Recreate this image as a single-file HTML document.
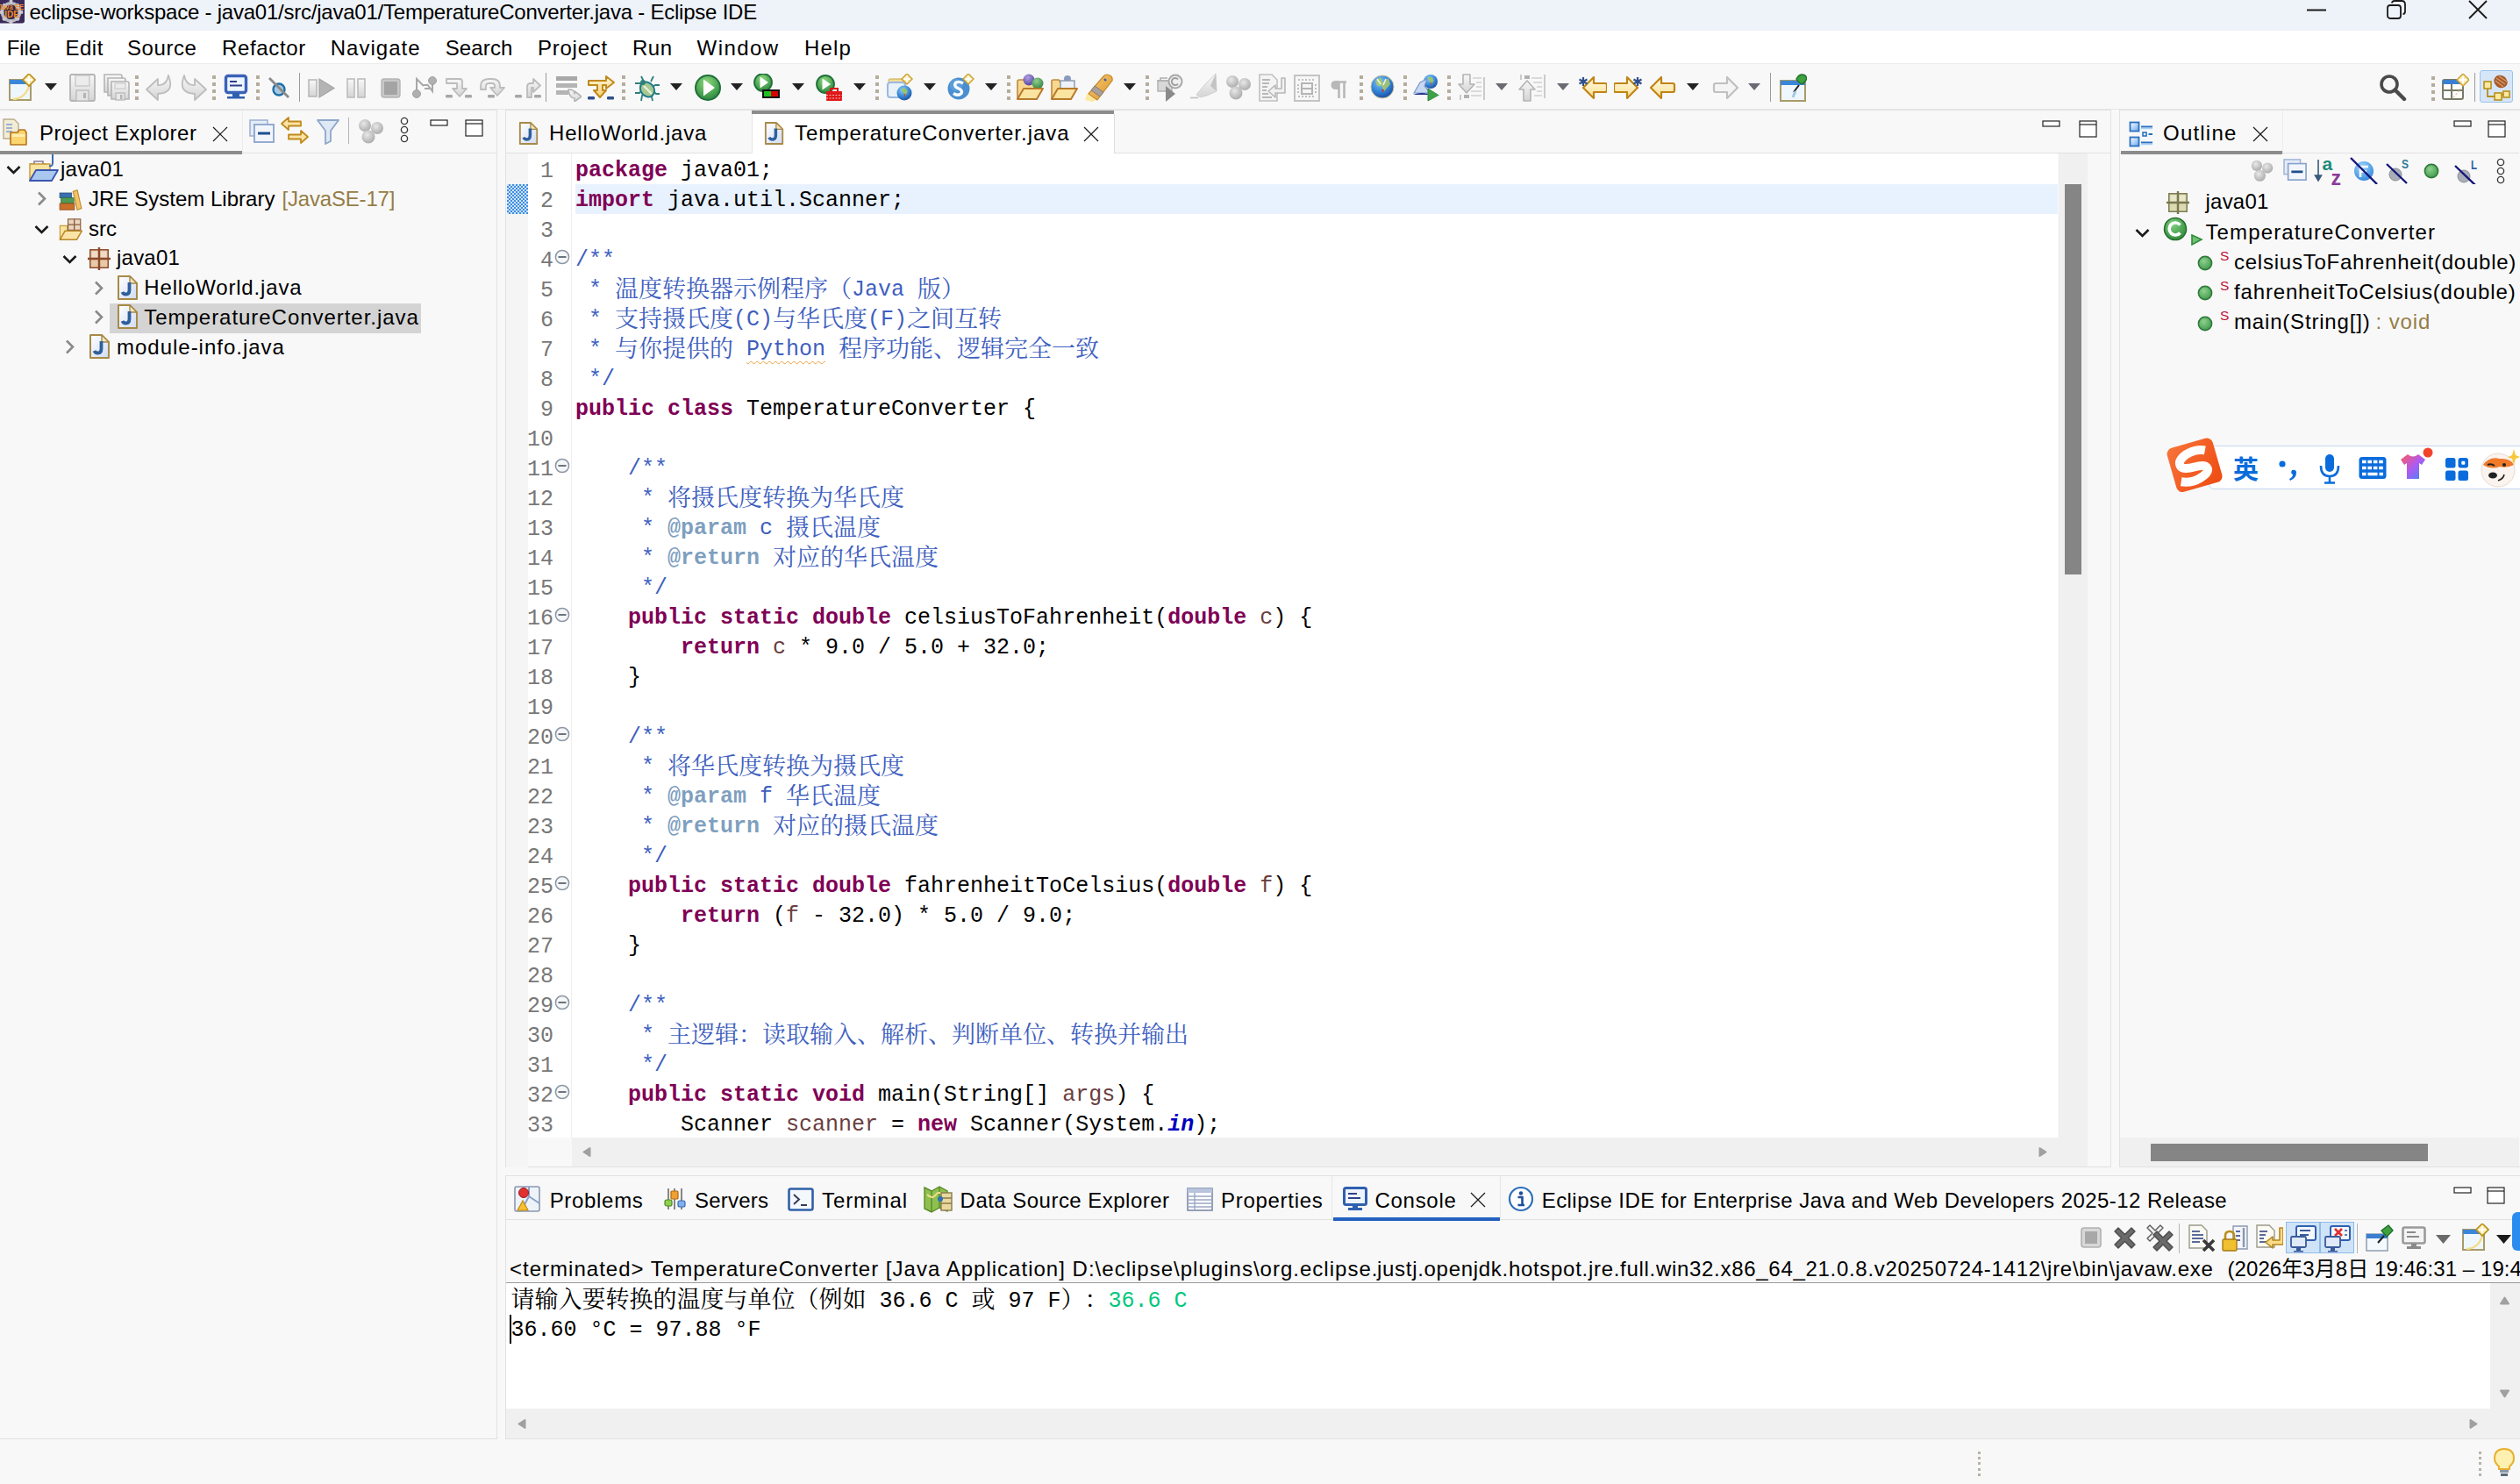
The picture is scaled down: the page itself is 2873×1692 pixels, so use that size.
<!DOCTYPE html><html><head><meta charset="utf-8"><title>Eclipse IDE</title><style>html,body{margin:0;padding:0}body{width:2873px;height:1692px;position:relative;overflow:hidden;background:#f8f8f8;font-family:'Liberation Sans','Noto Sans CJK SC',sans-serif;}div,svg,span.t{position:absolute}span.t{white-space:pre}b{font-weight:700}</style></head><body>
<div style="left:0px;top:0px;width:2873px;height:35px;background:#eef3f9;"></div>
<div style="left:0px;top:35px;width:2873px;height:38px;background:#ffffff;"></div>
<div style="left:0px;top:72px;width:2873px;height:1px;background:#ececec;"></div>
<div style="left:0px;top:73px;width:2873px;height:51px;background:#f8f8f8;"></div>
<div style="left:0px;top:124px;width:2873px;height:1px;background:#e6e6e6;"></div>
<span class="t" style="left:33.5px;top:1.98px;font-size:24px;line-height:24px;color:#000;font-family:'Liberation Sans','Noto Sans CJK SC',sans-serif;letter-spacing:-0.228px;">eclipse-workspace - java01/src/java01/TemperatureConverter.java - Eclipse IDE</span>
<span class="t" style="left:7.699999999999999px;top:42.98px;font-size:24px;line-height:24px;color:#000;font-family:'Liberation Sans','Noto Sans CJK SC',sans-serif;letter-spacing:-0.068px;">File</span>
<span class="t" style="left:74.4px;top:42.98px;font-size:24px;line-height:24px;color:#000;font-family:'Liberation Sans','Noto Sans CJK SC',sans-serif;letter-spacing:0.560px;">Edit</span>
<span class="t" style="left:145px;top:42.98px;font-size:24px;line-height:24px;color:#000;font-family:'Liberation Sans','Noto Sans CJK SC',sans-serif;letter-spacing:0.576px;">Source</span>
<span class="t" style="left:253px;top:42.98px;font-size:24px;line-height:24px;color:#000;font-family:'Liberation Sans','Noto Sans CJK SC',sans-serif;letter-spacing:0.650px;">Refactor</span>
<span class="t" style="left:376.8px;top:42.98px;font-size:24px;line-height:24px;color:#000;font-family:'Liberation Sans','Noto Sans CJK SC',sans-serif;letter-spacing:0.996px;">Navigate</span>
<span class="t" style="left:507.7px;top:42.98px;font-size:24px;line-height:24px;color:#000;font-family:'Liberation Sans','Noto Sans CJK SC',sans-serif;letter-spacing:0.126px;">Search</span>
<span class="t" style="left:613px;top:42.98px;font-size:24px;line-height:24px;color:#000;font-family:'Liberation Sans','Noto Sans CJK SC',sans-serif;letter-spacing:0.757px;">Project</span>
<span class="t" style="left:721px;top:42.98px;font-size:24px;line-height:24px;color:#000;font-family:'Liberation Sans','Noto Sans CJK SC',sans-serif;letter-spacing:0.490px;">Run</span>
<span class="t" style="left:794.6px;top:42.98px;font-size:24px;line-height:24px;color:#000;font-family:'Liberation Sans','Noto Sans CJK SC',sans-serif;letter-spacing:1.423px;">Window</span>
<span class="t" style="left:917px;top:42.98px;font-size:24px;line-height:24px;color:#000;font-family:'Liberation Sans','Noto Sans CJK SC',sans-serif;letter-spacing:1.185px;">Help</span>
<div style="left:-1px;top:125px;width:568px;height:1516px;background:#f8f8f8;box-sizing:border-box;border:1px solid #e1e1e1;"></div>
<div style="left:576px;top:125px;width:1831px;height:1206px;background:#f8f8f8;box-sizing:border-box;border:1px solid #e1e1e1;"></div>
<div style="left:2416px;top:125px;width:460px;height:1206px;background:#f8f8f8;box-sizing:border-box;border:1px solid #e1e1e1;"></div>
<div style="left:576px;top:1340px;width:2300px;height:301px;background:#f8f8f8;box-sizing:border-box;border:1px solid #e1e1e1;"></div>
<div style="left:0px;top:172px;width:276px;height:4px;background:#8c8c8c;"></div>
<div style="left:276px;top:174px;width:290px;height:1px;background:#e1e1e1;"></div>
<div style="left:276px;top:126px;width:1px;height:48px;background:#ececec;"></div>
<svg style="left:2px;top:134px" width="34" height="34" viewBox="0 0 34 34"><path d="M2 2 H14 L19 7 V24 H2 Z" fill="#f3ecd6" stroke="#b9ad8a" stroke-width="1.4"/><path d="M5 8 H12 M5 12 H12 M5 16 H12" stroke="#7f9fd0" stroke-width="1.6"/><path d="M10 17 H18 L20 14 H26 L28 17 V31 H10 Z" fill="#fbd56f" stroke="#b5741e" stroke-width="1.6" stroke-linejoin="round"/><rect x="11.5" y="19" width="15" height="3" fill="#fdeeb0"/></svg>
<span class="t" style="left:45px;top:139.98px;font-size:24px;line-height:24px;color:#000;font-family:'Liberation Sans','Noto Sans CJK SC',sans-serif;letter-spacing:0.548px;">Project Explorer</span>
<svg style="left:242px;top:144px" width="18" height="18" viewBox="0 0 18 18"><path d="M1 1 L17 17 M17 1 L1 17" stroke="#1a1a1a" stroke-width="1.2" fill="none"/></svg>
<svg style="left:284px;top:136px" width="30" height="28" viewBox="0 0 30 28"><rect x="1" y="1" width="20" height="18" fill="#e4ecf7" stroke="#9fb4d4" stroke-width="1.6"/><rect x="6" y="6" width="22" height="20" fill="#f2f6fc" stroke="#8aa3cc" stroke-width="1.8"/><rect x="10" y="14.5" width="14" height="3" fill="#1f4e8c"/></svg>
<svg style="left:319px;top:132px" width="34" height="34" viewBox="0 0 34 34"><path d="M2 9 L10 2 V6.5 H24 V11.5 H10 V16 Z" fill="#fbe3a6" stroke="#c08a1e" stroke-width="1.8" stroke-linejoin="round"/><path d="M32 24 L24 17 V21.5 H10 V26.5 H24 V31 Z" fill="#fbe3a6" stroke="#c08a1e" stroke-width="1.8" stroke-linejoin="round"/></svg>
<svg style="left:360px;top:134px" width="28" height="32" viewBox="0 0 28 32"><path d="M2 3 H26 L17 15 V27 L11 30 V15 Z" fill="#dfe9f6" stroke="#8fa6c8" stroke-width="1.8" stroke-linejoin="round"/></svg>
<div style="left:397px;top:134px;width:1px;height:30px;background:#b5b5b5;"></div>
<svg style="left:407px;top:134px" width="32" height="30" viewBox="0 0 32 30"><defs><radialGradient id="gb" cx=".4" cy=".35" r=".7"><stop offset="0" stop-color="#e8e8e8"/><stop offset="1" stop-color="#a9a9a9"/></radialGradient></defs><circle cx="9" cy="9" r="7" fill="url(#gb)"/><circle cx="23" cy="12" r="7" fill="url(#gb)"/><circle cx="13" cy="22" r="7.5" fill="url(#gb)"/></svg>
<svg style="left:454px;top:133px" width="14" height="30" viewBox="0 0 14 30"><circle cx="7" cy="5" r="3.6" fill="#fff" stroke="#3a3a3a" stroke-width="1.4"/><circle cx="7" cy="15" r="3.6" fill="#fff" stroke="#3a3a3a" stroke-width="1.4"/><circle cx="7" cy="25" r="3.6" fill="#fff" stroke="#3a3a3a" stroke-width="1.4"/></svg>
<svg style="left:490px;top:136px" width="22" height="9" viewBox="0 0 22 9"><rect x="1" y="1" width="19" height="6" fill="#fff" stroke="#1a1a1a" stroke-width="1.15"/></svg>
<svg style="left:530px;top:136px" width="21" height="21" viewBox="0 0 21 21"><rect x="1" y="1" width="19" height="18" fill="#fff" stroke="#1a1a1a" stroke-width="1.15"/><path d="M1 5 H20" stroke="#1a1a1a" stroke-width="1.15"/></svg>
<div style="left:125px;top:346px;width:355px;height:34px;background:#d4d4d4;"></div>
<span class="t" style="left:69px;top:180.88px;font-size:24px;line-height:24px;color:#000;font-family:'Liberation Sans','Noto Sans CJK SC',sans-serif;letter-spacing:0.228px;">java01</span>
<span class="t" style="left:101px;top:214.71px;font-size:24px;line-height:24px;color:#000;font-family:'Liberation Sans','Noto Sans CJK SC',sans-serif;letter-spacing:0.024px;">JRE System Library</span>
<span class="t" style="left:101px;top:248.54px;font-size:24px;line-height:24px;color:#000;font-family:'Liberation Sans','Noto Sans CJK SC',sans-serif;letter-spacing:0.033px;">src</span>
<span class="t" style="left:133px;top:282.37px;font-size:24px;line-height:24px;color:#000;font-family:'Liberation Sans','Noto Sans CJK SC',sans-serif;letter-spacing:0.228px;">java01</span>
<span class="t" style="left:164.3px;top:316.20px;font-size:24px;line-height:24px;color:#000;font-family:'Liberation Sans','Noto Sans CJK SC',sans-serif;letter-spacing:0.832px;">HelloWorld.java</span>
<span class="t" style="left:164.3px;top:350.03px;font-size:24px;line-height:24px;color:#000;font-family:'Liberation Sans','Noto Sans CJK SC',sans-serif;letter-spacing:0.961px;">TemperatureConverter.java</span>
<span class="t" style="left:133px;top:383.86px;font-size:24px;line-height:24px;color:#000;font-family:'Liberation Sans','Noto Sans CJK SC',sans-serif;letter-spacing:0.987px;">module-info.java</span>
<span class="t" style="left:321.4px;top:214.71px;font-size:24px;line-height:24px;color:#957d47;font-family:'Liberation Sans','Noto Sans CJK SC',sans-serif;letter-spacing:-0.167px;">[JavaSE-17]</span>
<svg style="left:7px;top:188.2px" width="17" height="11" viewBox="0 0 17 11"><path d="M1.5 2 L8.5 9 L15.5 2" fill="none" stroke="#1a1a1a" stroke-width="2.6"/></svg>
<svg style="left:42px;top:218.02999999999997px" width="11" height="17" viewBox="0 0 11 17"><path d="M2 1.5 L9 8.5 L2 15.5" fill="none" stroke="#8a8a8a" stroke-width="2.6"/></svg>
<svg style="left:39px;top:255.86px" width="17" height="11" viewBox="0 0 17 11"><path d="M1.5 2 L8.5 9 L15.5 2" fill="none" stroke="#1a1a1a" stroke-width="2.6"/></svg>
<svg style="left:71px;top:289.69px" width="17" height="11" viewBox="0 0 17 11"><path d="M1.5 2 L8.5 9 L15.5 2" fill="none" stroke="#1a1a1a" stroke-width="2.6"/></svg>
<svg style="left:106.5px;top:319.52px" width="11" height="17" viewBox="0 0 11 17"><path d="M2 1.5 L9 8.5 L2 15.5" fill="none" stroke="#8a8a8a" stroke-width="2.6"/></svg>
<svg style="left:106.5px;top:353.34999999999997px" width="11" height="17" viewBox="0 0 11 17"><path d="M2 1.5 L9 8.5 L2 15.5" fill="none" stroke="#8a8a8a" stroke-width="2.6"/></svg>
<svg style="left:74px;top:387.17999999999995px" width="11" height="17" viewBox="0 0 11 17"><path d="M2 1.5 L9 8.5 L2 15.5" fill="none" stroke="#8a8a8a" stroke-width="2.6"/></svg>
<svg style="left:31px;top:175.2px" width="36" height="34" viewBox="0 0 36 34"><path d="M3 12 H8 V9 H18 V12 H21" fill="none" stroke="#8a7a9a" stroke-width="1.6"/><path d="M3 12 V31 H26 V12 Z" fill="#f9e3a0" stroke="#c49a3a" stroke-width="1.4"/><path d="M3 31 L10 19 H35 L28 31 Z" fill="#a9c8f0" stroke="#3a55b0" stroke-width="1.8" stroke-linejoin="round"/><path d="M29 1 V11 Q29 15 25 14" fill="none" stroke="#3a6ab0" stroke-width="2"/></svg>
<svg style="left:66px;top:216.02999999999997px" width="29" height="24" viewBox="0 0 33 30"><rect x="1" y="5" width="17" height="7" fill="#3a6fb0" stroke="#2a4f80" stroke-width="1"/><rect x="3" y="12" width="18" height="8" fill="#4f9a55" stroke="#2f6f3a" stroke-width="1"/><rect x="1" y="20" width="21" height="9" fill="#c8702a" stroke="#8f4a1a" stroke-width="1"/><path d="M20 3 L26 1 L32 27 L26 29 Z" fill="#f3c46a" stroke="#c08a2a" stroke-width="1.4"/></svg>
<svg style="left:66px;top:248.86px" width="29" height="25" viewBox="0 0 33 30"><path d="M2 10 H12 V29 H2 Z" fill="#f9e3a0" stroke="#c49a3a" stroke-width="1.4"/><rect x="13" y="1" width="17" height="15" fill="#ead7c0" stroke="#8a5a3a" stroke-width="1.4"/><path d="M13 8.5 H30 M21.5 1 V16" stroke="#8a5a3a" stroke-width="1.6"/><path d="M2 29 L9 17 H32 L25 29 Z" fill="#fbe3a6" stroke="#b8862a" stroke-width="1.8" stroke-linejoin="round"/></svg>
<svg style="left:99.5px;top:281.69px" width="26" height="26" viewBox="0 0 28 28"><rect x="3" y="3" width="22" height="22" fill="#e8c9a8" stroke="#8a4a2a" stroke-width="1.6"/><path d="M0 14 H28 M14 0 V28" stroke="#8a4a2a" stroke-width="2.6"/><rect x="5" y="5" width="7" height="7" fill="#fff" opacity=".35"/><rect x="16" y="5" width="7" height="7" fill="#fff" opacity=".35"/></svg>
<svg style="left:133px;top:312.52px" width="26" height="30" viewBox="0 0 26 30"><defs><linearGradient id="jf" x1="0" y1="0" x2="1" y2="1"><stop offset="0" stop-color="#ffffff"/><stop offset="1" stop-color="#cfdcf4"/></linearGradient></defs><path d="M2 2 H15 L23 10 V28 H2 Z" fill="url(#jf)" stroke="#a88a48" stroke-width="2" stroke-linejoin="round"/><path d="M15 2 V10 H23 Z" fill="#f2e6c0" stroke="#a88a48" stroke-width="1.4" stroke-linejoin="round"/><path d="M14.5 9 V17.5 Q14.5 22.5 10.5 22.5 Q7.5 22.5 6.5 20" fill="none" stroke="#2f5f9c" stroke-width="3.8"/></svg>
<svg style="left:133px;top:346.34999999999997px" width="26" height="30" viewBox="0 0 26 30"><defs><linearGradient id="jf" x1="0" y1="0" x2="1" y2="1"><stop offset="0" stop-color="#ffffff"/><stop offset="1" stop-color="#cfdcf4"/></linearGradient></defs><path d="M2 2 H15 L23 10 V28 H2 Z" fill="url(#jf)" stroke="#a88a48" stroke-width="2" stroke-linejoin="round"/><path d="M15 2 V10 H23 Z" fill="#f2e6c0" stroke="#a88a48" stroke-width="1.4" stroke-linejoin="round"/><path d="M14.5 9 V17.5 Q14.5 22.5 10.5 22.5 Q7.5 22.5 6.5 20" fill="none" stroke="#2f5f9c" stroke-width="3.8"/></svg>
<svg style="left:101px;top:380.17999999999995px" width="26" height="30" viewBox="0 0 26 30"><defs><linearGradient id="jf" x1="0" y1="0" x2="1" y2="1"><stop offset="0" stop-color="#ffffff"/><stop offset="1" stop-color="#cfdcf4"/></linearGradient></defs><path d="M2 2 H15 L23 10 V28 H2 Z" fill="url(#jf)" stroke="#a88a48" stroke-width="2" stroke-linejoin="round"/><path d="M15 2 V10 H23 Z" fill="#f2e6c0" stroke="#a88a48" stroke-width="1.4" stroke-linejoin="round"/><path d="M14.5 9 V17.5 Q14.5 22.5 10.5 22.5 Q7.5 22.5 6.5 20" fill="none" stroke="#2f5f9c" stroke-width="3.8"/></svg>
<div style="left:577px;top:174px;width:1829px;height:1px;background:#e1e1e1;"></div>
<svg style="left:591px;top:137px" width="24" height="30" viewBox="0 0 26 30"><defs><linearGradient id="jf" x1="0" y1="0" x2="1" y2="1"><stop offset="0" stop-color="#ffffff"/><stop offset="1" stop-color="#cfdcf4"/></linearGradient></defs><path d="M2 2 H15 L23 10 V28 H2 Z" fill="url(#jf)" stroke="#a88a48" stroke-width="2" stroke-linejoin="round"/><path d="M15 2 V10 H23 Z" fill="#f2e6c0" stroke="#a88a48" stroke-width="1.4" stroke-linejoin="round"/><path d="M14.5 9 V17.5 Q14.5 22.5 10.5 22.5 Q7.5 22.5 6.5 20" fill="none" stroke="#2f5f9c" stroke-width="3.8"/></svg>
<span class="t" style="left:626px;top:140.08px;font-size:24px;line-height:24px;color:#000;font-family:'Liberation Sans','Noto Sans CJK SC',sans-serif;letter-spacing:0.845px;">HelloWorld.java</span>
<div style="left:857px;top:126px;width:413px;height:50px;background:#ffffff;"></div>
<div style="left:857px;top:126px;width:413px;height:4px;background:#8c8c8c;"></div>
<div style="left:857px;top:130px;width:1px;height:45px;background:#e6e6e6;"></div>
<div style="left:1270px;top:130px;width:1px;height:45px;background:#dcdcdc;"></div>
<svg style="left:871px;top:137px" width="24" height="30" viewBox="0 0 26 30"><defs><linearGradient id="jf" x1="0" y1="0" x2="1" y2="1"><stop offset="0" stop-color="#ffffff"/><stop offset="1" stop-color="#cfdcf4"/></linearGradient></defs><path d="M2 2 H15 L23 10 V28 H2 Z" fill="url(#jf)" stroke="#a88a48" stroke-width="2" stroke-linejoin="round"/><path d="M15 2 V10 H23 Z" fill="#f2e6c0" stroke="#a88a48" stroke-width="1.4" stroke-linejoin="round"/><path d="M14.5 9 V17.5 Q14.5 22.5 10.5 22.5 Q7.5 22.5 6.5 20" fill="none" stroke="#2f5f9c" stroke-width="3.8"/></svg>
<span class="t" style="left:906px;top:140.08px;font-size:24px;line-height:24px;color:#000;font-family:'Liberation Sans','Noto Sans CJK SC',sans-serif;letter-spacing:0.961px;">TemperatureConverter.java</span>
<svg style="left:1235px;top:144px" width="18" height="18" viewBox="0 0 18 18"><path d="M1 1 L17 17 M17 1 L1 17" stroke="#1a1a1a" stroke-width="1.2" fill="none"/></svg>
<svg style="left:2328px;top:137px" width="22" height="9" viewBox="0 0 22 9"><rect x="1" y="1" width="19" height="6" fill="#fff" stroke="#1a1a1a" stroke-width="1.15"/></svg>
<svg style="left:2370px;top:137px" width="21" height="21" viewBox="0 0 21 21"><rect x="1" y="1" width="19" height="18" fill="#fff" stroke="#1a1a1a" stroke-width="1.15"/><path d="M1 5 H20" stroke="#1a1a1a" stroke-width="1.15"/></svg>
<div style="left:577px;top:175px;width:25px;height:1156px;background:#f5f5f5;"></div>
<div style="left:602px;top:175px;width:1744px;height:1122px;background:#ffffff;"></div>
<div style="left:651px;top:175px;width:1px;height:1122px;background:#eeeeee;"></div>
<div style="left:656px;top:210px;width:1690px;height:34px;background:#e8f2fe;"></div>
<svg style="left:578px;top:210px" width="24" height="34"><defs><pattern id="chk" width="4" height="4" patternUnits="userSpaceOnUse"><rect width="4" height="4" fill="#3d8ee0"/><rect width="2" height="2" fill="#cfe4fa"/><rect x="2" y="2" width="2" height="2" fill="#cfe4fa"/></pattern></defs><rect width="24" height="34" fill="url(#chk)"/></svg>
<div style="left:2347px;top:175px;width:33px;height:1122px;background:#f0f0f0;"></div>
<div style="left:2354px;top:210px;width:19px;height:445px;background:#858585;"></div>
<div style="left:2380px;top:175px;width:26px;height:1155px;background:#f8f8f8;"></div>
<div style="left:652px;top:1297px;width:1728px;height:33px;background:#f0f0f0;"></div>
<svg style="left:664px;top:1307px" width="10" height="13"><path d="M8.5 2 V11 L1.5 6.5 Z" fill="#a0a0a0" stroke="#a0a0a0" stroke-width="2" stroke-linejoin="round"/></svg>
<svg style="left:2324px;top:1307px" width="10" height="13"><path d="M1.5 2 V11 L8.5 6.5 Z" fill="#a0a0a0" stroke="#a0a0a0" stroke-width="2" stroke-linejoin="round"/></svg>
<div style="left:602px;top:1297px;width:50px;height:33px;background:#f8f8f8;"></div>
<style>.z{font-family:'Noto Serif CJK SC',serif;font-size:27px;line-height:0;position:relative;top:1.5px;text-spacing-trim:space-all}</style>
<span class="t" style="left:616px;top:183.04px;font-size:25px;line-height:25px;color:#787878;font-family:'Liberation Mono','Noto Serif CJK SC',monospace;">1</span>
<span class="t" style="left:656px;top:182.04px;font-size:25px;line-height:25px;color:#000;font-family:'Liberation Mono','Noto Serif CJK SC',monospace;"><b style="color:#7f0055">package</b> java01;</span>
<span class="t" style="left:616px;top:217.04px;font-size:25px;line-height:25px;color:#787878;font-family:'Liberation Mono','Noto Serif CJK SC',monospace;">2</span>
<span class="t" style="left:656px;top:216.04px;font-size:25px;line-height:25px;color:#000;font-family:'Liberation Mono','Noto Serif CJK SC',monospace;"><b style="color:#7f0055">import</b> java.util.Scanner;</span>
<span class="t" style="left:616px;top:251.04px;font-size:25px;line-height:25px;color:#787878;font-family:'Liberation Mono','Noto Serif CJK SC',monospace;">3</span>
<span class="t" style="left:616px;top:285.04px;font-size:25px;line-height:25px;color:#787878;font-family:'Liberation Mono','Noto Serif CJK SC',monospace;">4</span>
<span class="t" style="left:656px;top:284.04px;font-size:25px;line-height:25px;color:#3f5fbf;font-family:'Liberation Mono','Noto Serif CJK SC',monospace;">/**</span>
<span class="t" style="left:616px;top:319.04px;font-size:25px;line-height:25px;color:#787878;font-family:'Liberation Mono','Noto Serif CJK SC',monospace;">5</span>
<span class="t" style="left:656px;top:318.04px;font-size:25px;line-height:25px;color:#3f5fbf;font-family:'Liberation Mono','Noto Serif CJK SC',monospace;"> * <span class="z">温度转换器示例程序（</span>Java <span class="z">版）</span></span>
<span class="t" style="left:616px;top:353.04px;font-size:25px;line-height:25px;color:#787878;font-family:'Liberation Mono','Noto Serif CJK SC',monospace;">6</span>
<span class="t" style="left:656px;top:352.04px;font-size:25px;line-height:25px;color:#3f5fbf;font-family:'Liberation Mono','Noto Serif CJK SC',monospace;"> * <span class="z">支持摄氏度</span>(C)<span class="z">与华氏度</span>(F)<span class="z">之间互转</span></span>
<span class="t" style="left:616px;top:387.04px;font-size:25px;line-height:25px;color:#787878;font-family:'Liberation Mono','Noto Serif CJK SC',monospace;">7</span>
<span class="t" style="left:656px;top:386.04px;font-size:25px;line-height:25px;color:#3f5fbf;font-family:'Liberation Mono','Noto Serif CJK SC',monospace;"> * <span class="z">与你提供的</span> <span style="text-decoration:underline wavy #e8a040 1px;text-underline-offset:6px;text-decoration-skip-ink:none">Python</span> <span class="z">程序功能、逻辑完全一致</span></span>
<span class="t" style="left:616px;top:421.04px;font-size:25px;line-height:25px;color:#787878;font-family:'Liberation Mono','Noto Serif CJK SC',monospace;">8</span>
<span class="t" style="left:656px;top:420.04px;font-size:25px;line-height:25px;color:#3f5fbf;font-family:'Liberation Mono','Noto Serif CJK SC',monospace;"> */</span>
<span class="t" style="left:616px;top:455.04px;font-size:25px;line-height:25px;color:#787878;font-family:'Liberation Mono','Noto Serif CJK SC',monospace;">9</span>
<span class="t" style="left:656px;top:454.04px;font-size:25px;line-height:25px;color:#000;font-family:'Liberation Mono','Noto Serif CJK SC',monospace;"><b style="color:#7f0055">public</b> <b style="color:#7f0055">class</b> TemperatureConverter {</span>
<span class="t" style="left:601px;top:489.04px;font-size:25px;line-height:25px;color:#787878;font-family:'Liberation Mono','Noto Serif CJK SC',monospace;">10</span>
<span class="t" style="left:601px;top:523.04px;font-size:25px;line-height:25px;color:#787878;font-family:'Liberation Mono','Noto Serif CJK SC',monospace;">11</span>
<span class="t" style="left:656px;top:522.04px;font-size:25px;line-height:25px;color:#3f5fbf;font-family:'Liberation Mono','Noto Serif CJK SC',monospace;">    /**</span>
<span class="t" style="left:601px;top:557.04px;font-size:25px;line-height:25px;color:#787878;font-family:'Liberation Mono','Noto Serif CJK SC',monospace;">12</span>
<span class="t" style="left:656px;top:556.04px;font-size:25px;line-height:25px;color:#3f5fbf;font-family:'Liberation Mono','Noto Serif CJK SC',monospace;">     * <span class="z">将摄氏度转换为华氏度</span></span>
<span class="t" style="left:601px;top:591.04px;font-size:25px;line-height:25px;color:#787878;font-family:'Liberation Mono','Noto Serif CJK SC',monospace;">13</span>
<span class="t" style="left:656px;top:590.04px;font-size:25px;line-height:25px;color:#3f5fbf;font-family:'Liberation Mono','Noto Serif CJK SC',monospace;">     * <b style="color:#7f9fbf">@param</b> c <span class="z">摄氏温度</span></span>
<span class="t" style="left:601px;top:625.04px;font-size:25px;line-height:25px;color:#787878;font-family:'Liberation Mono','Noto Serif CJK SC',monospace;">14</span>
<span class="t" style="left:656px;top:624.04px;font-size:25px;line-height:25px;color:#3f5fbf;font-family:'Liberation Mono','Noto Serif CJK SC',monospace;">     * <b style="color:#7f9fbf">@return</b> <span class="z">对应的华氏温度</span></span>
<span class="t" style="left:601px;top:659.04px;font-size:25px;line-height:25px;color:#787878;font-family:'Liberation Mono','Noto Serif CJK SC',monospace;">15</span>
<span class="t" style="left:656px;top:658.04px;font-size:25px;line-height:25px;color:#3f5fbf;font-family:'Liberation Mono','Noto Serif CJK SC',monospace;">     */</span>
<span class="t" style="left:601px;top:693.04px;font-size:25px;line-height:25px;color:#787878;font-family:'Liberation Mono','Noto Serif CJK SC',monospace;">16</span>
<span class="t" style="left:656px;top:692.04px;font-size:25px;line-height:25px;color:#000;font-family:'Liberation Mono','Noto Serif CJK SC',monospace;">    <b style="color:#7f0055">public</b> <b style="color:#7f0055">static</b> <b style="color:#7f0055">double</b> celsiusToFahrenheit(<b style="color:#7f0055">double</b> <span style="color:#6a3e3e">c</span>) {</span>
<span class="t" style="left:601px;top:727.04px;font-size:25px;line-height:25px;color:#787878;font-family:'Liberation Mono','Noto Serif CJK SC',monospace;">17</span>
<span class="t" style="left:656px;top:726.04px;font-size:25px;line-height:25px;color:#000;font-family:'Liberation Mono','Noto Serif CJK SC',monospace;">        <b style="color:#7f0055">return</b> <span style="color:#6a3e3e">c</span> * 9.0 / 5.0 + 32.0;</span>
<span class="t" style="left:601px;top:761.04px;font-size:25px;line-height:25px;color:#787878;font-family:'Liberation Mono','Noto Serif CJK SC',monospace;">18</span>
<span class="t" style="left:656px;top:760.04px;font-size:25px;line-height:25px;color:#000;font-family:'Liberation Mono','Noto Serif CJK SC',monospace;">    }</span>
<span class="t" style="left:601px;top:795.04px;font-size:25px;line-height:25px;color:#787878;font-family:'Liberation Mono','Noto Serif CJK SC',monospace;">19</span>
<span class="t" style="left:601px;top:829.04px;font-size:25px;line-height:25px;color:#787878;font-family:'Liberation Mono','Noto Serif CJK SC',monospace;">20</span>
<span class="t" style="left:656px;top:828.04px;font-size:25px;line-height:25px;color:#3f5fbf;font-family:'Liberation Mono','Noto Serif CJK SC',monospace;">    /**</span>
<span class="t" style="left:601px;top:863.04px;font-size:25px;line-height:25px;color:#787878;font-family:'Liberation Mono','Noto Serif CJK SC',monospace;">21</span>
<span class="t" style="left:656px;top:862.04px;font-size:25px;line-height:25px;color:#3f5fbf;font-family:'Liberation Mono','Noto Serif CJK SC',monospace;">     * <span class="z">将华氏度转换为摄氏度</span></span>
<span class="t" style="left:601px;top:897.04px;font-size:25px;line-height:25px;color:#787878;font-family:'Liberation Mono','Noto Serif CJK SC',monospace;">22</span>
<span class="t" style="left:656px;top:896.04px;font-size:25px;line-height:25px;color:#3f5fbf;font-family:'Liberation Mono','Noto Serif CJK SC',monospace;">     * <b style="color:#7f9fbf">@param</b> f <span class="z">华氏温度</span></span>
<span class="t" style="left:601px;top:931.04px;font-size:25px;line-height:25px;color:#787878;font-family:'Liberation Mono','Noto Serif CJK SC',monospace;">23</span>
<span class="t" style="left:656px;top:930.04px;font-size:25px;line-height:25px;color:#3f5fbf;font-family:'Liberation Mono','Noto Serif CJK SC',monospace;">     * <b style="color:#7f9fbf">@return</b> <span class="z">对应的摄氏温度</span></span>
<span class="t" style="left:601px;top:965.04px;font-size:25px;line-height:25px;color:#787878;font-family:'Liberation Mono','Noto Serif CJK SC',monospace;">24</span>
<span class="t" style="left:656px;top:964.04px;font-size:25px;line-height:25px;color:#3f5fbf;font-family:'Liberation Mono','Noto Serif CJK SC',monospace;">     */</span>
<span class="t" style="left:601px;top:999.04px;font-size:25px;line-height:25px;color:#787878;font-family:'Liberation Mono','Noto Serif CJK SC',monospace;">25</span>
<span class="t" style="left:656px;top:998.04px;font-size:25px;line-height:25px;color:#000;font-family:'Liberation Mono','Noto Serif CJK SC',monospace;">    <b style="color:#7f0055">public</b> <b style="color:#7f0055">static</b> <b style="color:#7f0055">double</b> fahrenheitToCelsius(<b style="color:#7f0055">double</b> <span style="color:#6a3e3e">f</span>) {</span>
<span class="t" style="left:601px;top:1033.04px;font-size:25px;line-height:25px;color:#787878;font-family:'Liberation Mono','Noto Serif CJK SC',monospace;">26</span>
<span class="t" style="left:656px;top:1032.04px;font-size:25px;line-height:25px;color:#000;font-family:'Liberation Mono','Noto Serif CJK SC',monospace;">        <b style="color:#7f0055">return</b> (<span style="color:#6a3e3e">f</span> - 32.0) * 5.0 / 9.0;</span>
<span class="t" style="left:601px;top:1067.04px;font-size:25px;line-height:25px;color:#787878;font-family:'Liberation Mono','Noto Serif CJK SC',monospace;">27</span>
<span class="t" style="left:656px;top:1066.04px;font-size:25px;line-height:25px;color:#000;font-family:'Liberation Mono','Noto Serif CJK SC',monospace;">    }</span>
<span class="t" style="left:601px;top:1101.04px;font-size:25px;line-height:25px;color:#787878;font-family:'Liberation Mono','Noto Serif CJK SC',monospace;">28</span>
<span class="t" style="left:601px;top:1135.04px;font-size:25px;line-height:25px;color:#787878;font-family:'Liberation Mono','Noto Serif CJK SC',monospace;">29</span>
<span class="t" style="left:656px;top:1134.04px;font-size:25px;line-height:25px;color:#3f5fbf;font-family:'Liberation Mono','Noto Serif CJK SC',monospace;">    /**</span>
<span class="t" style="left:601px;top:1169.04px;font-size:25px;line-height:25px;color:#787878;font-family:'Liberation Mono','Noto Serif CJK SC',monospace;">30</span>
<span class="t" style="left:656px;top:1168.04px;font-size:25px;line-height:25px;color:#3f5fbf;font-family:'Liberation Mono','Noto Serif CJK SC',monospace;">     * <span class="z">主逻辑：读取输入、解析、判断单位、转换并输出</span></span>
<span class="t" style="left:601px;top:1203.04px;font-size:25px;line-height:25px;color:#787878;font-family:'Liberation Mono','Noto Serif CJK SC',monospace;">31</span>
<span class="t" style="left:656px;top:1202.04px;font-size:25px;line-height:25px;color:#3f5fbf;font-family:'Liberation Mono','Noto Serif CJK SC',monospace;">     */</span>
<span class="t" style="left:601px;top:1237.04px;font-size:25px;line-height:25px;color:#787878;font-family:'Liberation Mono','Noto Serif CJK SC',monospace;">32</span>
<span class="t" style="left:656px;top:1236.04px;font-size:25px;line-height:25px;color:#000;font-family:'Liberation Mono','Noto Serif CJK SC',monospace;">    <b style="color:#7f0055">public</b> <b style="color:#7f0055">static</b> <b style="color:#7f0055">void</b> main(String[] <span style="color:#6a3e3e">args</span>) {</span>
<span class="t" style="left:601px;top:1271.04px;font-size:25px;line-height:25px;color:#787878;font-family:'Liberation Mono','Noto Serif CJK SC',monospace;">33</span>
<span class="t" style="left:656px;top:1270.04px;font-size:25px;line-height:25px;color:#000;font-family:'Liberation Mono','Noto Serif CJK SC',monospace;">        Scanner <span style="color:#6a3e3e">scanner</span> = <b style="color:#7f0055">new</b> Scanner(System.<b style="color:#0000c0;font-style:italic">in</b>);</span>
<svg style="left:632px;top:284.2px" width="18" height="18"><circle cx="9" cy="9" r="7.6" fill="#f4f6f8" stroke="#8c97a3" stroke-width="1.5"/><path d="M4.5 9 H13.5" stroke="#5c6670" stroke-width="1.8"/></svg>
<svg style="left:632px;top:522.2px" width="18" height="18"><circle cx="9" cy="9" r="7.6" fill="#f4f6f8" stroke="#8c97a3" stroke-width="1.5"/><path d="M4.5 9 H13.5" stroke="#5c6670" stroke-width="1.8"/></svg>
<svg style="left:632px;top:692.2px" width="18" height="18"><circle cx="9" cy="9" r="7.6" fill="#f4f6f8" stroke="#8c97a3" stroke-width="1.5"/><path d="M4.5 9 H13.5" stroke="#5c6670" stroke-width="1.8"/></svg>
<svg style="left:632px;top:828.2px" width="18" height="18"><circle cx="9" cy="9" r="7.6" fill="#f4f6f8" stroke="#8c97a3" stroke-width="1.5"/><path d="M4.5 9 H13.5" stroke="#5c6670" stroke-width="1.8"/></svg>
<svg style="left:632px;top:998.2px" width="18" height="18"><circle cx="9" cy="9" r="7.6" fill="#f4f6f8" stroke="#8c97a3" stroke-width="1.5"/><path d="M4.5 9 H13.5" stroke="#5c6670" stroke-width="1.8"/></svg>
<svg style="left:632px;top:1134.2px" width="18" height="18"><circle cx="9" cy="9" r="7.6" fill="#f4f6f8" stroke="#8c97a3" stroke-width="1.5"/><path d="M4.5 9 H13.5" stroke="#5c6670" stroke-width="1.8"/></svg>
<svg style="left:632px;top:1236.2px" width="18" height="18"><circle cx="9" cy="9" r="7.6" fill="#f4f6f8" stroke="#8c97a3" stroke-width="1.5"/><path d="M4.5 9 H13.5" stroke="#5c6670" stroke-width="1.8"/></svg>
<div style="left:2417px;top:174px;width:455px;height:1px;background:#e1e1e1;"></div>
<div style="left:2418px;top:172px;width:184px;height:4px;background:#8c8c8c;"></div>
<div style="left:2602px;top:126px;width:1px;height:48px;background:#ececec;"></div>
<svg style="left:2427px;top:137px" width="28" height="31" viewBox="0 0 28 29"><defs><linearGradient id="og" x1="0" y1="0" x2="1" y2="1"><stop offset="0" stop-color="#ffffff"/><stop offset="1" stop-color="#6aa8f0"/></linearGradient></defs><rect x="1.5" y="1.5" width="10" height="10" fill="url(#og)" stroke="#2a70c0" stroke-width="1.8"/><rect x="1.5" y="18.5" width="10" height="10" fill="url(#og)" stroke="#2a70c0" stroke-width="1.8"/><rect x="16" y="13" width="4" height="4" fill="#fff" stroke="#2a70c0" stroke-width="1.6"/><path d="M14 6.5 H27 M22.5 15 H27 M14 24.5 H27" stroke="#2a70c0" stroke-width="1.8"/><path d="M14 8.5 H27 M14 26.5 H27" stroke="#a8d0f8" stroke-width="1.6"/></svg>
<span class="t" style="left:2466px;top:140.08px;font-size:24px;line-height:24px;color:#000;font-family:'Liberation Sans','Noto Sans CJK SC',sans-serif;letter-spacing:1.208px;">Outline</span>
<svg style="left:2568px;top:144px" width="18" height="18" viewBox="0 0 18 18"><path d="M1 1 L17 17 M17 1 L1 17" stroke="#1a1a1a" stroke-width="1.2" fill="none"/></svg>
<svg style="left:2797px;top:137px" width="22" height="9" viewBox="0 0 22 9"><rect x="1" y="1" width="19" height="6" fill="#fff" stroke="#1a1a1a" stroke-width="1.15"/></svg>
<svg style="left:2836px;top:137px" width="21" height="21" viewBox="0 0 21 21"><rect x="1" y="1" width="19" height="18" fill="#fff" stroke="#1a1a1a" stroke-width="1.15"/><path d="M1 5 H20" stroke="#1a1a1a" stroke-width="1.15"/></svg>
<svg style="left:2565px;top:180px" width="28" height="30" viewBox="0 0 32 32"><defs><radialGradient id="gb" cx=".4" cy=".35" r=".7"><stop offset="0" stop-color="#e8e8e8"/><stop offset="1" stop-color="#a9a9a9"/></radialGradient></defs><circle cx="9" cy="9" r="7" fill="url(#gb)"/><circle cx="23" cy="12" r="7" fill="url(#gb)"/><circle cx="13" cy="22" r="7.5" fill="url(#gb)"/></svg>
<svg style="left:2603px;top:181px" width="28" height="26" viewBox="0 0 30 28"><rect x="1" y="1" width="20" height="18" fill="#e4ecf7" stroke="#9fb4d4" stroke-width="1.6"/><rect x="6" y="6" width="22" height="20" fill="#f2f6fc" stroke="#8aa3cc" stroke-width="1.8"/><rect x="10" y="14.5" width="14" height="3" fill="#1f4e8c"/></svg>
<svg style="left:2638px;top:178px" width="34" height="34" viewBox="0 0 34 34"><path d="M5 4 V26 M1.5 22 H8.5 L5 28 Z" fill="#3a5a7a" stroke="#3a5a7a" stroke-width="1.6"/><text x="9.5" y="16" font-family="Liberation Sans,sans-serif" font-weight="700" font-size="21" fill="#1f8a7a">a</text><text x="19.5" y="33" font-family="Liberation Sans,sans-serif" font-weight="700" font-size="23" fill="#8a3a9a">z</text></svg>
<svg style="left:2679px;top:178px" width="32" height="32" viewBox="0 0 32 32"><defs><radialGradient id="hf" cx=".4" cy=".3" r=".8"><stop offset="0" stop-color="#9fd8ff"/><stop offset="1" stop-color="#2a80d8"/></radialGradient></defs><circle cx="16" cy="17" r="11" fill="url(#hf)"/><path d="M12 24 V12 H21 M12 17.5 H19" fill="none" stroke="#fff" stroke-width="2.6"/><path d="M1 2 L31 32" stroke="#15157a" stroke-width="2.4"/></svg>
<svg style="left:2720px;top:178px" width="30" height="32" viewBox="0 0 30 32"><circle cx="11" cy="21" r="7" fill="#a9adb5" stroke="#8a8e96" stroke-width="1"/><path d="M1 9 L24 31" stroke="#15157a" stroke-width="2.4"/><text x="18" y="14" font-family="Liberation Sans,sans-serif" font-weight="700" font-size="15" fill="#2f7a9a" textLength="8" lengthAdjust="spacingAndGlyphs">S</text></svg>
<svg style="left:2763px;top:186px" width="18" height="18" viewBox="0 0 18 18"><defs><radialGradient id="gd" cx=".4" cy=".35" r=".7"><stop offset="0" stop-color="#8fd08f"/><stop offset="1" stop-color="#3f9a4a"/></radialGradient></defs><circle cx="9" cy="9" r="7.6" fill="url(#gd)" stroke="#2f7a3a" stroke-width="1.6"/></svg>
<svg style="left:2797px;top:180px" width="30" height="30" viewBox="0 0 30 30"><circle cx="12" cy="21" r="7" fill="#a9adb5" stroke="#8a8e96" stroke-width="1"/><path d="M2 9 L25 31" stroke="#15157a" stroke-width="2.4"/><text x="20" y="13" font-family="Liberation Sans,sans-serif" font-weight="700" font-size="14" fill="#2f5fa8" textLength="7" lengthAdjust="spacingAndGlyphs">L</text></svg>
<svg style="left:2844px;top:180px" width="14" height="30" viewBox="0 0 14 30"><circle cx="7" cy="5" r="3.6" fill="#fff" stroke="#3a3a3a" stroke-width="1.4"/><circle cx="7" cy="15" r="3.6" fill="#fff" stroke="#3a3a3a" stroke-width="1.4"/><circle cx="7" cy="25" r="3.6" fill="#fff" stroke="#3a3a3a" stroke-width="1.4"/></svg>
<svg style="left:2470px;top:217.8px" width="26" height="26" viewBox="0 0 28 28"><rect x="3" y="3" width="22" height="22" fill="#dcdab0" stroke="#7a7850" stroke-width="1.6"/><path d="M0 14 H28 M14 0 V28" stroke="#7a7850" stroke-width="2.6"/><rect x="5" y="5" width="7" height="7" fill="#fff" opacity=".35"/><rect x="16" y="5" width="7" height="7" fill="#fff" opacity=".35"/></svg>
<span class="t" style="left:2514.5px;top:218.48px;font-size:24px;line-height:24px;color:#000;font-family:'Liberation Sans','Noto Sans CJK SC',sans-serif;letter-spacing:0.228px;">java01</span>
<svg style="left:2434px;top:260.0px" width="17" height="11" viewBox="0 0 17 11"><path d="M1.5 2 L8.5 9 L15.5 2" fill="none" stroke="#1a1a1a" stroke-width="2.6"/></svg>
<svg style="left:2466px;top:247.0px" width="46" height="34" viewBox="0 0 46 34"><defs><radialGradient id="cg" cx=".4" cy=".3" r=".75"><stop offset="0" stop-color="#7fd07f"/><stop offset="1" stop-color="#2f8a3a"/></radialGradient></defs><circle cx="14" cy="14" r="12.5" fill="url(#cg)" stroke="#2a6f2f" stroke-width="1.6"/><path d="M19.5 9.5 A7 7 0 1 0 19.5 18.5" fill="none" stroke="#fff" stroke-width="3.6"/><path d="M33 21 L44 26 L33 32 Z" fill="#6fc06f" stroke="#2f8a3a" stroke-width="1.6"/></svg>
<span class="t" style="left:2514.5px;top:252.68px;font-size:24px;line-height:24px;color:#000;font-family:'Liberation Sans','Noto Sans CJK SC',sans-serif;letter-spacing:1.120px;">TemperatureConverter</span>
<svg style="left:2505px;top:291.20000000000005px" width="18" height="18" viewBox="0 0 18 18"><defs><radialGradient id="gd" cx=".4" cy=".35" r=".7"><stop offset="0" stop-color="#8fd08f"/><stop offset="1" stop-color="#3f9a4a"/></radialGradient></defs><circle cx="9" cy="9" r="7.6" fill="url(#gd)" stroke="#2f7a3a" stroke-width="1.6"/></svg>
<span class="t" style="left:2531px;top:284.08px;font-size:15.5px;line-height:15.5px;color:#c0103a;font-family:'Liberation Sans','Noto Sans CJK SC',sans-serif;letter-spacing:-0.344px;">S</span>
<span class="t" style="left:2547px;top:286.88px;font-size:24px;line-height:24px;color:#000;font-family:'Liberation Sans','Noto Sans CJK SC',sans-serif;letter-spacing:0.763px;">celsiusToFahrenheit(double)</span>
<svg style="left:2505px;top:325.40000000000003px" width="18" height="18" viewBox="0 0 18 18"><defs><radialGradient id="gd" cx=".4" cy=".35" r=".7"><stop offset="0" stop-color="#8fd08f"/><stop offset="1" stop-color="#3f9a4a"/></radialGradient></defs><circle cx="9" cy="9" r="7.6" fill="url(#gd)" stroke="#2f7a3a" stroke-width="1.6"/></svg>
<span class="t" style="left:2531px;top:318.28px;font-size:15.5px;line-height:15.5px;color:#c0103a;font-family:'Liberation Sans','Noto Sans CJK SC',sans-serif;letter-spacing:-0.344px;">S</span>
<span class="t" style="left:2547px;top:321.08px;font-size:24px;line-height:24px;color:#000;font-family:'Liberation Sans','Noto Sans CJK SC',sans-serif;letter-spacing:0.839px;">fahrenheitToCelsius(double)</span>
<svg style="left:2505px;top:359.6px" width="18" height="18" viewBox="0 0 18 18"><defs><radialGradient id="gd" cx=".4" cy=".35" r=".7"><stop offset="0" stop-color="#8fd08f"/><stop offset="1" stop-color="#3f9a4a"/></radialGradient></defs><circle cx="9" cy="9" r="7.6" fill="url(#gd)" stroke="#2f7a3a" stroke-width="1.6"/></svg>
<span class="t" style="left:2531px;top:352.48px;font-size:15.5px;line-height:15.5px;color:#c0103a;font-family:'Liberation Sans','Noto Sans CJK SC',sans-serif;letter-spacing:-0.344px;">S</span>
<span class="t" style="left:2547px;top:355.28px;font-size:24px;line-height:24px;color:#000;font-family:'Liberation Sans','Noto Sans CJK SC',sans-serif;letter-spacing:0.818px;">main(String[])</span>
<span class="t" style="left:2708.5px;top:355.28px;font-size:24px;line-height:24px;color:#957d47;font-family:'Liberation Sans','Noto Sans CJK SC',sans-serif;letter-spacing:0.921px;">: void</span>
<div style="left:2417px;top:1297px;width:455px;height:33px;background:#f0f0f0;"></div>
<div style="left:2452px;top:1304px;width:316px;height:20px;background:#858585;"></div>
<div style="left:2518px;top:508px;width:360px;height:50px;background:#fff;border:1.5px solid #c3d5ee;border-radius:6px;box-sizing:border-box"></div>
<svg style="left:2468px;top:497px" width="70" height="66" viewBox="0 0 70 66"><defs><linearGradient id="sg" x1="0" y1="0" x2="1" y2="1"><stop offset="0" stop-color="#f8743a"/><stop offset="1" stop-color="#ee4a10"/></linearGradient></defs><g transform="rotate(-16 35 33)"><rect x="7" y="7" width="54" height="52" rx="7" fill="url(#sg)"/><path d="M50 20 Q40 15 27 19 Q17 23 18 29 Q19 35 33 35 Q46 35 47 40 Q48 46 36 49 Q25 52 14 47" fill="none" stroke="#fff" stroke-width="10"/></g></svg>
<span class="t" style="left:2546px;top:518.95px;font-size:29px;line-height:29px;color:#0a6cdc;font-family:'Noto Sans CJK SC',sans-serif;font-weight:700;">英</span>
<svg style="left:2596px;top:520px" width="28" height="28" viewBox="0 0 28 28"><circle cx="6" cy="9" r="3.6" fill="#0a6cdc"/><path d="M17 16 Q22 15 22 19 Q22 25 15 28 L14 26 Q18 24 18 21 Q15 20 17 16 Z" fill="#0a6cdc"/></svg>
<svg style="left:2643px;top:517px" width="26" height="36" viewBox="0 0 26 36"><rect x="8" y="1" width="10" height="20" rx="5" fill="#0a6cdc"/><path d="M3 14 Q3 26 13 26 Q23 26 23 14" fill="none" stroke="#0a6cdc" stroke-width="2.6"/><path d="M13 26 V33 M7 33.5 H19" stroke="#0a6cdc" stroke-width="2.6"/></svg>
<svg style="left:2689px;top:520px" width="32" height="28" viewBox="0 0 32 28"><rect x="0.5" y="1" width="31" height="25" rx="3.5" fill="#0a6cdc"/><path d="M4 6.5 H28 M4 13.5 H28" stroke="#fff" stroke-width="3.6" stroke-dasharray="4.6 1.8"/><path d="M4 20.5 H8.5 M10.5 20.5 H21.5 M23.5 20.5 H28" stroke="#fff" stroke-width="3.6"/></svg>
<svg style="left:2735px;top:510px" width="40" height="40" viewBox="0 0 40 40"><defs><linearGradient id="sh" x1="0" y1="0" x2="1" y2="1"><stop offset="0" stop-color="#ff5a5a"/><stop offset=".5" stop-color="#b05af0"/><stop offset="1" stop-color="#3a8af8"/></linearGradient></defs><path d="M2 14 L10 8 Q16 13 22 8 L30 14 L26 20 L23 18 V36 H9 V18 L6 20 Z" fill="url(#sh)"/><circle cx="33" cy="6" r="5.5" fill="#f0452a"/></svg>
<svg style="left:2787px;top:521px" width="28" height="28" viewBox="0 0 28 28"><rect x="1" y="1" width="11.5" height="11.5" rx="2.5" fill="#0a6cdc"/><rect x="15.5" y="1" width="11.5" height="11.5" rx="3" fill="#0a6cdc"/><rect x="19.3" y="4.8" width="4" height="4" rx="1" fill="#fff"/><rect x="1" y="15.5" width="11.5" height="11.5" rx="2.5" fill="#0a6cdc"/><rect x="15.5" y="15.5" width="11.5" height="11.5" rx="2.5" fill="#0a6cdc"/></svg>
<svg style="left:2828px;top:510px" width="45" height="46" viewBox="0 0 45 46"><circle cx="20" cy="26" r="19" fill="#fbf3ee" stroke="#e6dad2" stroke-width="1"/><path d="M3 20 Q10 10 22 13 Q34 12 38 20 Q30 24 22 22 Q12 26 3 20 Z" fill="#f07a2a"/><path d="M8 20 Q12 18 16 21" stroke="#222" stroke-width="2" fill="none"/><circle cx="27" cy="20" r="2" fill="#222"/><ellipse cx="14" cy="32" rx="5" ry="3.5" fill="#222"/><path d="M20 38 Q26 36 27 31" stroke="#222" stroke-width="1.6" fill="none"/><path d="M38 2 L40 9 L45 11 L40 13 L38 20 L36 13 L31 11 L36 9 Z" fill="#f8c83a"/></svg>
<div style="left:577px;top:1390px;width:2296px;height:1px;background:#e1e1e1;"></div>
<svg style="left:586px;top:1352px" width="30" height="30" viewBox="0 0 30 30"><rect x="1" y="1" width="28" height="28" rx="2" fill="#eef3fa" stroke="#8a98b0" stroke-width="1.6"/><path d="M17 1 V12 L29 20 M17 12 L8 29" stroke="#8aa0c8" stroke-width="2" fill="none"/><circle cx="11" cy="8" r="5.5" fill="#e03030" stroke="#a01818" stroke-width="1"/><path d="M4 28 L10 17 L16 28 Z" fill="#f8c030" stroke="#c08a10" stroke-width="1.2"/></svg>
<span class="t" style="left:626.7px;top:1356.88px;font-size:24px;line-height:24px;color:#000;font-family:'Liberation Sans','Noto Sans CJK SC',sans-serif;letter-spacing:0.678px;">Problems</span>
<svg style="left:755px;top:1353px" width="28" height="28" viewBox="0 0 28 28"><path d="M7 2 V26 M14 2 V26 M22 2 V26" stroke="#6a6a6a" stroke-width="1.6"/><rect x="3" y="15" width="8" height="7" rx="2" fill="#8fd04f" stroke="#4f8a2a" stroke-width="1.2"/><rect x="10" y="5" width="8" height="9" rx="1" fill="#f0a030" stroke="#b06a10" stroke-width="1.2"/><rect x="18" y="16" width="8" height="7" rx="2" fill="#7fb0f0" stroke="#3a6ab0" stroke-width="1.2"/></svg>
<span class="t" style="left:792px;top:1356.88px;font-size:24px;line-height:24px;color:#000;font-family:'Liberation Sans','Noto Sans CJK SC',sans-serif;letter-spacing:0.230px;">Servers</span>
<svg style="left:898px;top:1354px" width="30" height="28" viewBox="0 0 30 28"><rect x="1.5" y="1.5" width="27" height="24" rx="2" fill="#f4f8fd" stroke="#2f5fa8" stroke-width="2.6"/><path d="M7 8 L13 13.5 L7 19" fill="none" stroke="#3a3a5a" stroke-width="2"/><path d="M15 20 H22" stroke="#3a3a5a" stroke-width="2"/></svg>
<span class="t" style="left:937px;top:1356.88px;font-size:24px;line-height:24px;color:#000;font-family:'Liberation Sans','Noto Sans CJK SC',sans-serif;letter-spacing:0.912px;">Terminal</span>
<svg style="left:1053px;top:1350px" width="34" height="34" viewBox="0 0 34 34"><path d="M1 4 L9 8 L18 3 L27 8 V31 L18 27 L9 32 L1 28 Z" fill="#8fc04f" stroke="#5a8a2a" stroke-width="1.4"/><path d="M9 8 V32 M18 3 V27" stroke="#5a8a2a" stroke-width="1.4"/><path d="M4 12 Q10 18 14 12 T24 16" stroke="#f0e08a" stroke-width="2" fill="none"/><rect x="20" y="10" width="12" height="20" fill="#e8d8a0" stroke="#8a7a4a" stroke-width="1.4"/><path d="M20 16 H32 M20 22 H32" stroke="#8a7a4a" stroke-width="1.4"/><circle cx="19" cy="17" r="3" fill="#2f6fb8"/></svg>
<span class="t" style="left:1094.6px;top:1356.88px;font-size:24px;line-height:24px;color:#000;font-family:'Liberation Sans','Noto Sans CJK SC',sans-serif;letter-spacing:0.472px;">Data Source Explorer</span>
<svg style="left:1353px;top:1354px" width="30" height="28" viewBox="0 0 30 28"><rect x="1" y="1" width="28" height="25" fill="#fff" stroke="#7a8aa8" stroke-width="1.6"/><rect x="1" y="1" width="28" height="5" fill="#b8c4dc"/><path d="M1 10 H29 M1 14 H29 M1 18 H29 M1 22 H29 M9 6 V26" stroke="#9aa8c4" stroke-width="1.4"/></svg>
<span class="t" style="left:1392px;top:1356.88px;font-size:24px;line-height:24px;color:#000;font-family:'Liberation Sans','Noto Sans CJK SC',sans-serif;letter-spacing:0.711px;">Properties</span>
<div style="left:1520px;top:1388px;width:190px;height:4px;background:#2460c0;"></div>
<div style="left:1518px;top:1341px;width:1px;height:49px;background:#e6e6e6;"></div>
<div style="left:1710px;top:1341px;width:1px;height:49px;background:#e6e6e6;"></div>
<svg style="left:1531px;top:1353px" width="28" height="28" viewBox="0 0 28 28"><rect x="1.5" y="1.5" width="25" height="19" rx="2" fill="#eef4fc" stroke="#2f5fb0" stroke-width="3"/><path d="M6 8 H16 M6 13 H20" stroke="#2f3f8a" stroke-width="2"/><path d="M11 21 H17 V24 H22 V27 H6 V24 H11 Z" fill="#2f5fb0"/></svg>
<span class="t" style="left:1567.5px;top:1356.88px;font-size:24px;line-height:24px;color:#000;font-family:'Liberation Sans','Noto Sans CJK SC',sans-serif;letter-spacing:0.705px;">Console</span>
<svg style="left:1676px;top:1359px" width="18" height="18" viewBox="0 0 18 18"><path d="M1 1 L17 17 M17 1 L1 17" stroke="#1a1a1a" stroke-width="1.2" fill="none"/></svg>
<svg style="left:1719px;top:1352px" width="30" height="30" viewBox="0 0 30 30"><circle cx="15" cy="15" r="13" fill="#fff" stroke="#2f6fb8" stroke-width="2.2"/><circle cx="15" cy="8.5" r="2.2" fill="#1f4f9a"/><path d="M11.5 13 H16.5 V22 H19 M11.5 22 H16.5" stroke="#1f4f9a" stroke-width="2.6" fill="none"/></svg>
<span class="t" style="left:1757.7px;top:1356.88px;font-size:24px;line-height:24px;color:#000;font-family:'Liberation Sans','Noto Sans CJK SC',sans-serif;letter-spacing:0.447px;">Eclipse IDE for Enterprise Java and Web Developers 2025-12 Release</span>
<svg style="left:2797px;top:1353px" width="22" height="9" viewBox="0 0 22 9"><rect x="1" y="1" width="19" height="6" fill="#fff" stroke="#1a1a1a" stroke-width="1.15"/></svg>
<svg style="left:2835px;top:1353px" width="21" height="21" viewBox="0 0 21 21"><rect x="1" y="1" width="19" height="18" fill="#fff" stroke="#1a1a1a" stroke-width="1.15"/><path d="M1 5 H20" stroke="#1a1a1a" stroke-width="1.15"/></svg>
<svg style="left:2372px;top:1399px" width="24" height="24" viewBox="0 0 24 24"><rect x="1" y="1" width="22" height="22" rx="3" fill="#d8d8d8" stroke="#b0b0b0" stroke-width="1.6"/><rect x="5" y="5" width="14" height="14" fill="#a8a8a8"/></svg>
<svg style="left:2408px;top:1397px" width="29" height="29" viewBox="0 0 29 29"><path d="M3 7 L7 3 L14.5 10.5 L22 3 L26 7 L18.5 14.5 L26 22 L22 26 L14.5 18.5 L7 26 L3 22 L10.5 14.5 Z" fill="#6a6a6a" stroke="#4a4a4a" stroke-width="1.4" stroke-linejoin="round"/></svg>
<svg style="left:2446px;top:1395px" width="33" height="33" viewBox="0 0 33 33"><path d="M2 5 L5 2 L11 8 L17 2 L20 5 L14 11 L20 17 L17 20 L11 14 L5 20 L2 17 L8 11 Z" fill="#f0f0f0" stroke="#5a5a5a" stroke-width="1.4" stroke-linejoin="round"/><path d="M9 13 L13 9 L20 16 L27 9 L31 13 L24 20 L31 27 L27 31 L20 24 L13 31 L9 27 L16 20 Z" fill="#6a6a6a" stroke="#4a4a4a" stroke-width="1.4" stroke-linejoin="round"/></svg>
<div style="left:2484px;top:1395px;width:1px;height:34px;background:#b5b5b5;"></div>
<svg style="left:2494px;top:1396px" width="32" height="32" viewBox="0 0 32 32"><path d="M2 1 H16 L22 7 V27 H2 Z" fill="#fbfbf4" stroke="#9a9a8a" stroke-width="1.4"/><path d="M5 8 H14 M5 12 H18 M5 16 H18 M5 20 H14" stroke="#5a6a9a" stroke-width="1.8"/><path d="M18 18 L30 30 M30 18 L18 30" stroke="#3a3a3a" stroke-width="3.6"/></svg>
<svg style="left:2532px;top:1396px" width="32" height="32" viewBox="0 0 32 32"><path d="M14 2 H30 V28 H14 Z" fill="#f4f6fa" stroke="#8a98b0" stroke-width="1.4"/><path d="M17 8 H22 M17 13 H22 M17 18 H22" stroke="#5a6a9a" stroke-width="1.8"/><path d="M26 4 V26" stroke="#8a98b0" stroke-width="2.4"/><path d="M5 18 V13 Q5 8 10 8 Q15 8 15 13 V18" fill="none" stroke="#b8901a" stroke-width="2.6"/><rect x="2" y="17" width="16" height="13" rx="1.5" fill="#f0c030" stroke="#a87a10" stroke-width="1.4"/></svg>
<svg style="left:2571px;top:1396px" width="32" height="32" viewBox="0 0 32 32"><path d="M2 1 H16 L22 7 V26 H2 Z" fill="#fbfbf4" stroke="#9a9a8a" stroke-width="1.4"/><path d="M5 8 H14 M5 12 H12 M5 16 H10 M5 20 H14" stroke="#5a6a9a" stroke-width="1.8"/><path d="M28 4 V18 H20 V14 L12 20.5 L20 27 V23 H32 V4 Z" fill="#f8dc8a" stroke="#b8861a" stroke-width="1.6" stroke-linejoin="round"/></svg>
<div style="left:2606px;top:1393px;width:39px;height:36px;background:#cfe3f8;border:1px solid #8fbbe8;box-sizing:border-box"></div>
<div style="left:2645px;top:1393px;width:39px;height:36px;background:#cfe3f8;border:1px solid #8fbbe8;box-sizing:border-box"></div>
<svg style="left:2610px;top:1396px" width="32" height="32" viewBox="0 0 32 32"><rect x="8" y="2" width="22" height="16" rx="2" fill="#f4f8fd" stroke="#2f5fb0" stroke-width="2"/><path d="M12 7 H24 M12 12 H22" stroke="#3a5a9a" stroke-width="1.8"/><rect x="2" y="14" width="17" height="12" rx="1.5" fill="#dfe9f8" stroke="#3a5a9a" stroke-width="1.8"/><path d="M8 27 H13 V30 H16 V31.5 H5 V30 H8 Z" fill="#3a5a9a"/></svg>
<svg style="left:2649px;top:1396px" width="32" height="32" viewBox="0 0 32 32"><rect x="8" y="2" width="22" height="16" rx="2" fill="#f4f8fd" stroke="#2f5fb0" stroke-width="2"/><path d="M13 5 L21 13 M21 5 L13 13" stroke="#e03030" stroke-width="2.6"/><path d="M24 7 H27 M24 12 H27" stroke="#3a5a9a" stroke-width="1.6"/><rect x="2" y="14" width="17" height="12" rx="1.5" fill="#dfe9f8" stroke="#3a5a9a" stroke-width="1.8"/><path d="M8 27 H13 V30 H16 V31.5 H5 V30 H8 Z" fill="#3a5a9a"/></svg>
<div style="left:2687px;top:1395px;width:1px;height:34px;background:#b5b5b5;"></div>
<svg style="left:2696px;top:1395px" width="33" height="33" viewBox="0 0 33 33"><rect x="2" y="12" width="24" height="19" fill="#f4f9fd" stroke="#8a98a8" stroke-width="1.4"/><rect x="2" y="12" width="24" height="5" fill="#3a7fd0"/><path d="M15 22 L22 14" stroke="#222" stroke-width="2"/><path d="M19 8 L27 2 L32 8 L25 15 Z" fill="#3fa03f" stroke="#1f6f2a" stroke-width="1.4" stroke-linejoin="round"/></svg>
<svg style="left:2738px;top:1398px" width="30" height="28" viewBox="0 0 30 28"><rect x="1.5" y="1.5" width="25" height="18" rx="2" fill="#f4f4f4" stroke="#9a9a9a" stroke-width="2.6"/><path d="M6 7 H16 M6 12 H20" stroke="#8a8a8a" stroke-width="2"/><path d="M11 20 H17 V23 H22 V26 H6 V23 H11 Z" fill="#8a8a8a"/></svg>
<svg style="left:2777px;top:1408px" width="17" height="10" viewBox="0 0 17 10"><path d="M0 0 H17 L8.5 10 Z" fill="#6a6a6a"/></svg>
<svg style="left:2806px;top:1395px" width="32" height="32" viewBox="0 0 32 32"><rect x="2" y="7" width="24" height="23" fill="#eef7fd" stroke="#a89a6a" stroke-width="2"/><rect x="2" y="7" width="24" height="5" fill="#3a86d8"/><path d="M6 29 Q20 28 24 14" stroke="#f5dc8a" stroke-width="2.4" fill="none"/><path d="M24 0 L31 7 L24 14 L17 7 Z" fill="#fbe9a8" stroke="#b8901a" stroke-width="1.6"/><path d="M24 3 V11 M20 7 H28" stroke="#fff" stroke-width="1.8"/></svg>
<svg style="left:2846px;top:1408px" width="17" height="10" viewBox="0 0 17 10"><path d="M0 0 H17 L8.5 10 Z" fill="#1a1a1a"/></svg>
<div style="left:2864px;top:1382px;width:14px;height:44px;background:#2b8cf0;border-radius:6px"></div>
<div style="left:577px;top:1430px;width:2290px;height:32px;overflow:hidden;background:transparent"></div>
<span class="t" style="left:581px;top:1435.18px;font-size:24px;line-height:24px;color:#000;font-family:'Liberation Sans','Noto Sans CJK SC',sans-serif;letter-spacing:1.013px;">&lt;terminated&gt; TemperatureConverter [Java Application] D:\eclipse\plugins\org.eclipse.</span>
<span class="t" style="left:1570px;top:1435.18px;font-size:24px;line-height:24px;color:#000;font-family:'Liberation Sans','Noto Sans CJK SC',sans-serif;letter-spacing:0.701px;">justj.openjdk.hotspot.jre.full.win32.x86_64_21.0.8.v20250724-1412\jre\bin\javaw.exe</span>
<span class="t" style="left:2539.5px;top:1435.18px;font-size:24px;line-height:24px;color:#000;font-family:'Liberation Sans','Noto Sans CJK SC',sans-serif;letter-spacing:0.075px;">(2026年3月8日 19:46:31 – 19:4</span>
<div style="left:577px;top:1462px;width:2296px;height:1px;background:#9a9a9a;"></div>
<div style="left:577px;top:1463px;width:2262px;height:144px;background:#ffffff;"></div>
<div style="left:2839px;top:1463px;width:34px;height:143px;background:#f0f0f0;"></div>
<div style="left:577px;top:1606px;width:2296px;height:34px;background:#f0f0f0;"></div>
<svg style="left:2849px;top:1478px" width="13" height="10"><path d="M2 8.5 H11 L6.5 1.5 Z" fill="#a0a0a0" stroke="#a0a0a0" stroke-width="2" stroke-linejoin="round"/></svg>
<svg style="left:2849px;top:1584px" width="13" height="10"><path d="M2 1.5 H11 L6.5 8.5 Z" fill="#a0a0a0" stroke="#a0a0a0" stroke-width="2" stroke-linejoin="round"/></svg>
<svg style="left:589.5px;top:1617px" width="10" height="13"><path d="M8.5 2 V11 L1.5 6.5 Z" fill="#a0a0a0" stroke="#a0a0a0" stroke-width="2" stroke-linejoin="round"/></svg>
<svg style="left:2815px;top:1617px" width="10" height="13"><path d="M1.5 2 V11 L8.5 6.5 Z" fill="#a0a0a0" stroke="#a0a0a0" stroke-width="2" stroke-linejoin="round"/></svg>
<span class="t" style="left:582.5px;top:1470.84px;font-size:25px;line-height:25px;color:#000;font-family:'Liberation Mono','Noto Serif CJK SC',monospace;"><span class="z">请输入要转换的温度与单位（例如</span> 36.6 C <span class="z">或</span> 97 F<span class="z">）：</span><span style="color:#00c87d">36.6 C</span></span>
<span class="t" style="left:582.5px;top:1504.34px;font-size:25px;line-height:25px;color:#000;font-family:'Liberation Mono','Noto Serif CJK SC',monospace;">36.60 °C = 97.88 °F</span>
<div style="left:581px;top:1499px;width:1.5px;height:33px;background:#000;"></div>
<div style="left:2255px;top:1655.0px;width:3px;height:3px;background:#b9b2a4;"></div>
<div style="left:2255px;top:1661.2px;width:3px;height:3px;background:#b9b2a4;"></div>
<div style="left:2255px;top:1667.4px;width:3px;height:3px;background:#b9b2a4;"></div>
<div style="left:2255px;top:1673.6px;width:3px;height:3px;background:#b9b2a4;"></div>
<div style="left:2255px;top:1679.8px;width:3px;height:3px;background:#b9b2a4;"></div>
<div style="left:2826px;top:1655.0px;width:3px;height:3px;background:#b9b2a4;"></div>
<div style="left:2826px;top:1661.2px;width:3px;height:3px;background:#b9b2a4;"></div>
<div style="left:2826px;top:1667.4px;width:3px;height:3px;background:#b9b2a4;"></div>
<div style="left:2826px;top:1673.6px;width:3px;height:3px;background:#b9b2a4;"></div>
<div style="left:2826px;top:1679.8px;width:3px;height:3px;background:#b9b2a4;"></div>
<svg style="left:2842px;top:1650px" width="26" height="34" viewBox="0 0 26 34"><path d="M13 2 Q24 2 24 13 Q24 18 19 22 V25 H7 V22 Q2 18 2 13 Q2 2 13 2 Z" fill="#fdf0b0" stroke="#e8b030" stroke-width="2"/><rect x="8" y="26" width="10" height="3" fill="#8a98a8"/><rect x="9" y="30" width="8" height="3" fill="#5a6a7a"/></svg>
<svg style="left:-3px;top:-3px" width="31" height="30" viewBox="0 0 34 32"><rect x="0" y="0" width="34" height="32" rx="3" fill="#3a2a5a"/><circle cx="17" cy="18" r="13" fill="#b8b8c0"/><circle cx="17" cy="18" r="9" fill="#2f2548"/><path d="M17 2 V8 M17 28 V34 M3 18 H8 M26 18 H32 M7 8 L11 12 M27 8 L23 12 M7 28 L11 24 M27 28 L23 24" stroke="#c8c8d0" stroke-width="4"/><text x="1" y="15" font-family="Liberation Sans,sans-serif" font-size="9" font-weight="700" fill="#f08a2a" textLength="32" lengthAdjust="spacingAndGlyphs">Java EE</text><text x="9" y="25" font-family="Liberation Sans,sans-serif" font-size="11" font-weight="700" fill="#f08a2a">IDE</text></svg>
<svg style="left:2630px;top:10px" width="22" height="3"><rect width="22" height="2" y="0.5" fill="#1a1a1a"/></svg>
<svg style="left:2721px;top:0px" width="23" height="23"><rect x="1" y="6" width="15" height="15" rx="3" fill="none" stroke="#1a1a1a" stroke-width="1.8"/><path d="M6 3.5 Q6 1 9 1 H17 Q21 1 21 5 V13 Q21 16 18.5 16" fill="none" stroke="#1a1a1a" stroke-width="1.8"/></svg>
<svg style="left:2814px;top:0px" width="22" height="22"><path d="M1 1 L21 21 M21 1 L1 21" stroke="#1a1a1a" stroke-width="1.8"/></svg>
<svg style="left:8.5px;top:84px" width="32" height="32" viewBox="0 0 32 32"><rect x="2" y="7" width="24" height="23" fill="#eef7fd" stroke="#a89a6a" stroke-width="2"/><rect x="2" y="7" width="24" height="5" fill="#3a86d8"/><path d="M6 29 Q20 28 24 14" stroke="#f5dc8a" stroke-width="2.4" fill="none"/><path d="M24 0 L31 7 L24 14 L17 7 Z" fill="#fbe9a8" stroke="#b8901a" stroke-width="1.6"/><path d="M24 3 V11 M20 7 H28" stroke="#fff" stroke-width="1.8"/></svg>
<svg style="left:51px;top:95px" width="14" height="8" viewBox="0 0 14 8"><path d="M0 0 H14 L7 8 Z" fill="#222"/></svg>
<svg style="left:78px;top:84px" width="32" height="32" viewBox="0 0 32 32"><defs><linearGradient id="gg" x1="0" y1="0" x2="0" y2="1"><stop offset="0" stop-color="#f8f8f8"/><stop offset="1" stop-color="#d4d4d4"/></linearGradient></defs><path d="M2 3 Q2 1 4 1 H28 Q30 1 30 3 V29 Q30 31 28 31 H4 Q2 31 2 29 Z" fill="url(#gg)" stroke="#b4b4b4" stroke-width="1.8"/><rect x="8" y="2" width="16" height="12" fill="#ececec" stroke="#c4c4c4" stroke-width="1.2"/><rect x="9" y="19" width="14" height="12" fill="#e4e4e4" stroke="#bcbcbc" stroke-width="1.4"/><rect x="17" y="22" width="3" height="6" fill="#b4b4b4"/></svg>
<svg style="left:117px;top:84px" width="32" height="32" viewBox="0 0 32 32"><defs><linearGradient id="gg" x1="0" y1="0" x2="0" y2="1"><stop offset="0" stop-color="#f8f8f8"/><stop offset="1" stop-color="#d4d4d4"/></linearGradient></defs><path d="M2 1 h18 q2 0 2 2 v18 h-20 z" fill="url(#gg)" stroke="#b4b4b4" stroke-width="1.6"/><path d="M6 5 h18 q2 0 2 2 v18 h-20 z" fill="url(#gg)" stroke="#b4b4b4" stroke-width="1.6"/><path d="M10 9 h18 q2 0 2 2 v18 h-20 z" fill="url(#gg)" stroke="#b4b4b4" stroke-width="1.6"/><rect x="14" y="11" width="12" height="6" fill="#ececec" stroke="#c4c4c4" stroke-width="1"/><rect x="15" y="22" width="10" height="8" fill="#e8e8e8" stroke="#bcbcbc" stroke-width="1.4"/><rect x="20" y="24" width="2.5" height="5" fill="#b4b4b4"/></svg>
<div style="left:154px;top:86px;width:4px;height:4px;background:#b5ad9c;"></div>
<div style="left:154px;top:94px;width:4px;height:4px;background:#b5ad9c;"></div>
<div style="left:154px;top:102px;width:4px;height:4px;background:#b5ad9c;"></div>
<div style="left:154px;top:110px;width:4px;height:4px;background:#b5ad9c;"></div>
<svg style="left:166px;top:84px" width="32" height="32" viewBox="0 0 32 32"><defs><linearGradient id="gg" x1="0" y1="0" x2="0" y2="1"><stop offset="0" stop-color="#f8f8f8"/><stop offset="1" stop-color="#d4d4d4"/></linearGradient></defs><path d="M1 18 L14 6 V13 Q24 14 26 2 Q34 22 14 23 V30 Z" fill="url(#gg)" stroke="#bdbdbd" stroke-width="1.8" stroke-linejoin="round"/></svg>
<svg style="left:204px;top:84px" width="32" height="32" viewBox="0 0 32 32"><defs><linearGradient id="gg" x1="0" y1="0" x2="0" y2="1"><stop offset="0" stop-color="#f8f8f8"/><stop offset="1" stop-color="#d4d4d4"/></linearGradient></defs><path d="M31 18 L18 6 V13 Q8 14 6 2 Q-2 22 18 23 V30 Z" fill="url(#gg)" stroke="#bdbdbd" stroke-width="1.8" stroke-linejoin="round"/></svg>
<div style="left:242px;top:86px;width:4px;height:4px;background:#b5ad9c;"></div>
<div style="left:242px;top:94px;width:4px;height:4px;background:#b5ad9c;"></div>
<div style="left:242px;top:102px;width:4px;height:4px;background:#b5ad9c;"></div>
<div style="left:242px;top:110px;width:4px;height:4px;background:#b5ad9c;"></div>
<svg style="left:255px;top:84px" width="32" height="32" viewBox="0 0 32 32"><rect x="2.5" y="2.5" width="23" height="19" rx="2.5" fill="#eef5fd" stroke="#3a62b8" stroke-width="3.4"/><path d="M7 9 H15 M7 13.5 H21" stroke="#2f3f8a" stroke-width="2"/><path d="M10 22 H18 V26 H24 V28.5 H4 V26 H10 Z" fill="#2f5fb0"/></svg>
<div style="left:292px;top:86px;width:4px;height:4px;background:#b5ad9c;"></div>
<div style="left:292px;top:94px;width:4px;height:4px;background:#b5ad9c;"></div>
<div style="left:292px;top:102px;width:4px;height:4px;background:#b5ad9c;"></div>
<div style="left:292px;top:110px;width:4px;height:4px;background:#b5ad9c;"></div>
<svg style="left:304px;top:84px" width="32" height="32" viewBox="0 0 32 32"><circle cx="14" cy="18" r="6.5" fill="#a8c8e0" stroke="#1f6fa8" stroke-width="2.4"/><path d="M3 5 L25 27" stroke="#8a8a8a" stroke-width="2.8"/></svg>
<div style="left:341px;top:83px;width:1px;height:33px;background:#9a9a9a;"></div>
<svg style="left:351px;top:84px" width="32" height="32" viewBox="0 0 32 32"><defs><linearGradient id="gg" x1="0" y1="0" x2="0" y2="1"><stop offset="0" stop-color="#f8f8f8"/><stop offset="1" stop-color="#d4d4d4"/></linearGradient></defs><rect x="1" y="7" width="9" height="19" fill="url(#gg)" stroke="#b8b8b8" stroke-width="1.6"/><path d="M13 6 V27 L30 16.5 Z" fill="#b4b4b4" stroke="#a4a4a4" stroke-width="1.2"/></svg>
<svg style="left:392px;top:84px" width="32" height="32" viewBox="0 0 32 32"><defs><linearGradient id="gg" x1="0" y1="0" x2="0" y2="1"><stop offset="0" stop-color="#f8f8f8"/><stop offset="1" stop-color="#d4d4d4"/></linearGradient></defs><rect x="4" y="6" width="8" height="21" fill="url(#gg)" stroke="#bcbcbc" stroke-width="1.6"/><rect x="16" y="6" width="8" height="21" fill="url(#gg)" stroke="#bcbcbc" stroke-width="1.6"/></svg>
<svg style="left:431px;top:84px" width="32" height="32" viewBox="0 0 32 32"><rect x="4" y="6" width="21" height="21" rx="3" fill="#c8c8c8" stroke="#b4b4b4" stroke-width="1.4"/><rect x="7" y="9" width="15" height="15" fill="#a4a4a4"/></svg>
<svg style="left:467px;top:84px" width="32" height="32" viewBox="0 0 32 32"><path d="M8 22 V6 L16 14 M20 12 L26 20 V8" fill="none" stroke="#a8a8a8" stroke-width="2"/><path d="M15 13 H20 M17 17 H23" stroke="#a8a8a8" stroke-width="2"/><circle cx="8" cy="23" r="4.5" fill="#b0b0b0" stroke="#a0a0a0"/><circle cx="26" cy="8" r="4.5" fill="#b0b0b0" stroke="#a0a0a0"/></svg>
<svg style="left:507px;top:84px" width="32" height="32" viewBox="0 0 32 32"><defs><linearGradient id="gg" x1="0" y1="0" x2="0" y2="1"><stop offset="0" stop-color="#f8f8f8"/><stop offset="1" stop-color="#d4d4d4"/></linearGradient></defs><path d="M2 6 H17 Q20 6 20 9 V17 H25 L17 26 L9 17 H14 V11 H2 Z" fill="url(#gg)" stroke="#bcbcbc" stroke-width="1.8" stroke-linejoin="round"/><rect x="1" y="24" width="8" height="3.5" rx="1.2" fill="#a8a8a8"/><rect x="23" y="24" width="8" height="3.5" rx="1.2" fill="#a8a8a8"/></svg>
<svg style="left:546px;top:84px" width="32" height="32" viewBox="0 0 32 32"><defs><linearGradient id="gg" x1="0" y1="0" x2="0" y2="1"><stop offset="0" stop-color="#f8f8f8"/><stop offset="1" stop-color="#d4d4d4"/></linearGradient></defs><path d="M2 18 V14 Q2 6 12 6 H15 Q24 6 24 14 V16 H29 L21 25 L13 16 H18 V14 Q18 11 15 11 H12 Q8 11 8 14 V18 Z" fill="url(#gg)" stroke="#bcbcbc" stroke-width="1.8" stroke-linejoin="round"/><rect x="10" y="24" width="8" height="3.5" rx="1.2" fill="#a8a8a8"/></svg>
<svg style="left:585px;top:84px" width="32" height="32" viewBox="0 0 32 32"><defs><linearGradient id="gg" x1="0" y1="0" x2="0" y2="1"><stop offset="0" stop-color="#f8f8f8"/><stop offset="1" stop-color="#d4d4d4"/></linearGradient></defs><path d="M16 27 V15 Q16 11 20 11 H23 V6 L31 13.5 L23 21 V16 H21 V27 Z" fill="url(#gg)" stroke="#bcbcbc" stroke-width="1.8" stroke-linejoin="round"/><rect x="2" y="24" width="8" height="3.5" rx="1.2" fill="#a8a8a8"/><rect x="24" y="24" width="8" height="3.5" rx="1.2" fill="#a8a8a8"/></svg>
<div style="left:622px;top:83px;width:1px;height:33px;background:#9a9a9a;"></div>
<svg style="left:631px;top:84px" width="32" height="32" viewBox="0 0 32 32"><defs><linearGradient id="gg" x1="0" y1="0" x2="0" y2="1"><stop offset="0" stop-color="#f8f8f8"/><stop offset="1" stop-color="#d4d4d4"/></linearGradient></defs><rect x="3" y="3" width="24" height="5" fill="#a8a8a8"/><rect x="3" y="11" width="24" height="5" fill="#b4b4b4"/><rect x="3" y="19" width="14" height="5" fill="#b4b4b4"/><path d="M17 18 Q24 18 24 23 V20 L32 26 L24 32 V28 Q18 28 17 18 Z" fill="url(#gg)" stroke="#b4b4b4" stroke-width="1.6" stroke-linejoin="round"/></svg>
<svg style="left:669px;top:84px" width="32" height="32" viewBox="0 0 32 32"><defs><linearGradient id="yg" x1="0" y1="0" x2="0" y2="1"><stop offset="0" stop-color="#fff6d8"/><stop offset="1" stop-color="#f8d070"/></linearGradient></defs><path d="M2 8 H22 V3 L31 10 L22 17 V13 H18 V19 H22 L15 27 L8 19 H12 V13 H2 Z" fill="url(#yg)" stroke="#c08a1e" stroke-width="2" stroke-linejoin="round"/><rect x="1" y="26" width="8" height="3.5" rx="1.2" fill="#2f4f8a"/><rect x="23" y="26" width="8" height="3.5" rx="1.2" fill="#2f4f8a"/></svg>
<div style="left:709px;top:86px;width:4px;height:4px;background:#b5ad9c;"></div>
<div style="left:709px;top:94px;width:4px;height:4px;background:#b5ad9c;"></div>
<div style="left:709px;top:102px;width:4px;height:4px;background:#b5ad9c;"></div>
<div style="left:709px;top:110px;width:4px;height:4px;background:#b5ad9c;"></div>
<svg style="left:722px;top:84px" width="32" height="32" viewBox="0 0 32 32"><path d="M9 3 L12 9 M23 3 L20 9 M2 11 H8 L11 14 M30 13 H25 L22 15 M2 22 H7 L10 19 M30 23 H26 L23 20 M9 31 L10 25 L13 23 M22 31 L21 26 L19 24" fill="none" stroke="#2f7f7a" stroke-width="1.8"/><ellipse cx="16" cy="18" rx="7.5" ry="9" transform="rotate(-38 16 18)" fill="#a8c890" stroke="#1f7a8a" stroke-width="2"/><path d="M12 14 L21 23" stroke="#e8f0d8" stroke-width="2.4"/><circle cx="11" cy="10" r="3" fill="#2f7f7a"/></svg>
<svg style="left:763.5px;top:95px" width="14" height="8" viewBox="0 0 14 8"><path d="M0 0 H14 L7 8 Z" fill="#222"/></svg>
<svg style="left:791px;top:84px" width="32" height="32" viewBox="0 0 32 32"><defs><radialGradient id="rg" cx=".45" cy=".3" r=".8"><stop offset="0" stop-color="#8fd87f"/><stop offset=".7" stop-color="#3f9a4a"/><stop offset="1" stop-color="#2a7a3a"/></radialGradient></defs><circle cx="16" cy="16" r="14" fill="url(#rg)" stroke="#1f6f3a" stroke-width="2"/><path d="M11 6.5 V25.5 L24 16 Z" fill="#fff"/></svg>
<svg style="left:833px;top:95px" width="14" height="8" viewBox="0 0 14 8"><path d="M0 0 H14 L7 8 Z" fill="#222"/></svg>
<svg style="left:859px;top:84px" width="32" height="32" viewBox="0 0 32 32"><defs><radialGradient id="rg2" cx=".45" cy=".3" r=".8"><stop offset="0" stop-color="#8fd87f"/><stop offset=".7" stop-color="#3f9a4a"/><stop offset="1" stop-color="#2a7a3a"/></radialGradient></defs><circle cx="11" cy="10" r="10" fill="url(#rg2)" stroke="#1f6f3a" stroke-width="1.8"/><path d="M7.5 3.5 V16.5 L17 10 Z" fill="#fff"/><rect x="10" y="18" width="20" height="10" fill="#111"/><rect x="12" y="20" width="8" height="6" fill="#1fc020"/><rect x="20" y="20" width="8" height="6" fill="#d80000"/></svg>
<svg style="left:903px;top:95px" width="14" height="8" viewBox="0 0 14 8"><path d="M0 0 H14 L7 8 Z" fill="#222"/></svg>
<svg style="left:930px;top:84px" width="32" height="32" viewBox="0 0 32 32"><defs><radialGradient id="rg2" cx=".45" cy=".3" r=".8"><stop offset="0" stop-color="#8fd87f"/><stop offset=".7" stop-color="#3f9a4a"/><stop offset="1" stop-color="#2a7a3a"/></radialGradient></defs><circle cx="11" cy="12" r="10" fill="url(#rg2)" stroke="#1f6f3a" stroke-width="1.8"/><path d="M7.5 5.5 V18.5 L17 12 Z" fill="#fff"/><path d="M17 20 V17 H25 V20" fill="none" stroke="#d81818" stroke-width="2"/><rect x="12" y="20" width="18" height="11" rx="1" fill="#e01818"/><path d="M12 24.5 H30 M12 28 H30" stroke="#f8b0b0" stroke-width="1" stroke-dasharray="2 1.5"/></svg>
<svg style="left:973px;top:95px" width="14" height="8" viewBox="0 0 14 8"><path d="M0 0 H14 L7 8 Z" fill="#222"/></svg>
<div style="left:998px;top:86px;width:4px;height:4px;background:#b5ad9c;"></div>
<div style="left:998px;top:94px;width:4px;height:4px;background:#b5ad9c;"></div>
<div style="left:998px;top:102px;width:4px;height:4px;background:#b5ad9c;"></div>
<div style="left:998px;top:110px;width:4px;height:4px;background:#b5ad9c;"></div>
<svg style="left:1011px;top:84px" width="32" height="32" viewBox="0 0 32 32"><rect x="2" y="6" width="18" height="4" rx="1.5" fill="#f3dc9a" stroke="#c8a848" stroke-width="1"/><rect x="1" y="10" width="20" height="17" rx="3" fill="#e8f0fa" stroke="#9ab8e0" stroke-width="2"/><defs><radialGradient id="gl" cx=".4" cy=".3" r=".8"><stop offset="0" stop-color="#8fd0f8"/><stop offset=".6" stop-color="#2f7fd0"/><stop offset="1" stop-color="#1f3f8a"/></radialGradient></defs><circle cx="20" cy="22" r="8.5" fill="url(#gl)"/><path d="M16.175 17.325 L20.85 16.475 L23.825 20.3 L20.85 25.825 L19.15 21.575 Z" fill="#9fc85a" opacity=".9"/><path d="M19.575 22.85 L21.7 23.275 L20.425 27.1 Z" fill="#c83a2a" opacity=".8"/><path d="M23 0 L29 6 L23 12 L17 6 Z" fill="#fbe9a8" stroke="#c8a030" stroke-width="1.4"/><path d="M23 2.5 V9.5 M19.5 6 H26.5" stroke="#fff" stroke-width="1.8"/></svg>
<svg style="left:1053px;top:95px" width="14" height="8" viewBox="0 0 14 8"><path d="M0 0 H14 L7 8 Z" fill="#222"/></svg>
<svg style="left:1080px;top:84px" width="32" height="32" viewBox="0 0 32 32"><circle cx="13" cy="17" r="12.5" fill="#4a90d0"/><circle cx="10" cy="13" r="7" fill="#6aa8e0" opacity=".6"/><path d="M18 11 Q13 8 9.5 10.5 Q7 14 12 16.5 Q18 19 16 22.5 Q12 26 7 22.5" fill="none" stroke="#fff" stroke-width="3.4"/><path d="M24 0 L30 6 L24 12 L18 6 Z" fill="#fbe9a8" stroke="#c8a030" stroke-width="1.4"/><path d="M24 2.5 V9.5 M20.5 6 H27.5" stroke="#fff" stroke-width="1.8"/></svg>
<svg style="left:1123px;top:95px" width="14" height="8" viewBox="0 0 14 8"><path d="M0 0 H14 L7 8 Z" fill="#222"/></svg>
<div style="left:1148px;top:86px;width:4px;height:4px;background:#b5ad9c;"></div>
<div style="left:1148px;top:94px;width:4px;height:4px;background:#b5ad9c;"></div>
<div style="left:1148px;top:102px;width:4px;height:4px;background:#b5ad9c;"></div>
<div style="left:1148px;top:110px;width:4px;height:4px;background:#b5ad9c;"></div>
<svg style="left:1158px;top:84px" width="32" height="32" viewBox="0 0 32 32"><path d="M2 29 V9 Q2 7 4 7 H10 L12 10 H22 V16" fill="#f8d890" stroke="#c08a3a" stroke-width="1.6" stroke-linejoin="round"/><defs><radialGradient id="pb" cx=".4" cy=".3" r=".8"><stop offset="0" stop-color="#b0a0e0"/><stop offset="1" stop-color="#4a3a9a"/></radialGradient><radialGradient id="gb2" cx=".4" cy=".3" r=".8"><stop offset="0" stop-color="#8fd08f"/><stop offset="1" stop-color="#2a7a3a"/></radialGradient></defs><circle cx="15" cy="7" r="6.5" fill="url(#pb)"/><circle cx="25" cy="11" r="6.5" fill="url(#gb2)"/><path d="M2 29 L9 17 H31 L24 29 Z" fill="#fbe3a0" stroke="#b87a2a" stroke-width="2" stroke-linejoin="round"/></svg>
<svg style="left:1197px;top:84px" width="32" height="32" viewBox="0 0 32 32"><path d="M2 29 V9 Q2 7 4 7 H10 L12 10 H22 V16" fill="#f8d890" stroke="#c08a3a" stroke-width="1.6" stroke-linejoin="round"/><circle cx="20" cy="6" r="4" fill="#8a9ac0"/><rect x="12" y="8" width="16" height="11" fill="#eef2fa" stroke="#8a98b0" stroke-width="1.4"/><path d="M2 29 L9 17 H31 L24 29 Z" fill="#fbe3a0" stroke="#b87a2a" stroke-width="2" stroke-linejoin="round"/></svg>
<svg style="left:1237px;top:84px" width="32" height="32" viewBox="0 0 32 32"><defs><linearGradient id="tg" x1="0" y1="0" x2="1" y2="1"><stop offset="0" stop-color="#fbd078"/><stop offset="1" stop-color="#d8902a"/></linearGradient></defs><path d="M0 24 L4 32 L14 30 L12 22 Z" fill="#fffbe0"/><path d="M2 23 L13 30 L8 32 L0 30 Z" fill="#fbe9a0"/><path d="M4 23 L14 30 L31 8 Q32 3 27 1.5 Q24 0 21 3 Z" fill="url(#tg)" stroke="#c8882a" stroke-width="1.2" stroke-linejoin="round"/><path d="M7 19 L17 26 L21 21 L11 14 Z" fill="#a8a0a0" stroke="#8a7a6a" stroke-width="1"/><path d="M22 6 L24 8" stroke="#2f5fb0" stroke-width="2.4"/></svg>
<svg style="left:1281px;top:95px" width="14" height="8" viewBox="0 0 14 8"><path d="M0 0 H14 L7 8 Z" fill="#222"/></svg>
<div style="left:1306px;top:86px;width:4px;height:4px;background:#b5ad9c;"></div>
<div style="left:1306px;top:94px;width:4px;height:4px;background:#b5ad9c;"></div>
<div style="left:1306px;top:102px;width:4px;height:4px;background:#b5ad9c;"></div>
<div style="left:1306px;top:110px;width:4px;height:4px;background:#b5ad9c;"></div>
<svg style="left:1318px;top:84px" width="32" height="32" viewBox="0 0 32 32"><rect x="2" y="8" width="16" height="12" fill="#d8d8d8" stroke="#b0b0b0" stroke-width="1.4"/><path d="M1 8 H19 M5 8 V5 H13" stroke="#b0b0b0" stroke-width="1.6" fill="none"/><path d="M11 14 V32 L22 23 Z" fill="#8a8a8a"/><circle cx="22" cy="9" r="7.5" fill="#f0f0f0" stroke="#a8a8a8" stroke-width="2"/><path d="M25 6.5 A4 4 0 1 0 25 11.5" fill="none" stroke="#a0a0a0" stroke-width="2"/></svg>
<svg style="left:1356px;top:84px" width="32" height="32" viewBox="0 0 32 32"><defs><linearGradient id="gg" x1="0" y1="0" x2="0" y2="1"><stop offset="0" stop-color="#f8f8f8"/><stop offset="1" stop-color="#d4d4d4"/></linearGradient></defs><path d="M30 0 L31 20 L20 25 L12 27 L8 24 L18 12 Z" fill="url(#gg)" stroke="#d0d0d0" stroke-width="1"/><path d="M30 0 L31 20 L24 14 Z" fill="#c4c4c4"/><path d="M1 27.5 H10" stroke="#c0c0c0" stroke-width="1.6"/></svg>
<svg style="left:1396px;top:84px" width="32" height="32" viewBox="0 0 32 32"><defs><radialGradient id="gb" cx=".4" cy=".35" r=".7"><stop offset="0" stop-color="#e8e8e8"/><stop offset="1" stop-color="#a9a9a9"/></radialGradient></defs><circle cx="9" cy="9" r="7" fill="url(#gb)"/><circle cx="23" cy="12" r="7" fill="url(#gb)"/><circle cx="13" cy="22" r="7.5" fill="url(#gb)"/></svg>
<svg style="left:1434px;top:84px" width="32" height="32" viewBox="0 0 32 32"><path d="M2 1 H16 L22 7 V31 H2 Z" fill="#f4f4f4" stroke="#c0c0c0" stroke-width="1.6"/><path d="M5 7 H14 M5 11 H13 M5 15 H11 M5 19 H10 M5 23 H12 M5 27 H16" stroke="#b8b8b8" stroke-width="1.8"/><path d="M27 5 V17 H20 V13 L12 20 L20 27 V22 H31 V5 Z" fill="#f0f0f0" stroke="#b8b8b8" stroke-width="1.6" stroke-linejoin="round"/></svg>
<svg style="left:1474px;top:84px" width="32" height="32" viewBox="0 0 32 32"><rect x="2" y="2" width="28" height="29" fill="#f6f6f6" stroke="#c4c4c4" stroke-width="2"/><path d="M6 7 H26 M6 26 H26" stroke="#c0c0c0" stroke-width="2" stroke-dasharray="2 2"/><path d="M6 12 V22 M26 12 V22" stroke="#c0c0c0" stroke-width="2" stroke-dasharray="2 2"/><rect x="10" y="11" width="12" height="12" fill="none" stroke="#b4b4b4" stroke-width="2"/><path d="M10 17 H22" stroke="#b4b4b4" stroke-width="2"/></svg>
<svg style="left:1511px;top:84px" width="32" height="32" viewBox="0 0 32 32"><path d="M21.5 9 V28 M15.5 9 V28 M24 9.5 H14" fill="none" stroke="#b8b8b8" stroke-width="2.6"/><path d="M15 8 H12 Q6.5 8 6.5 13 Q6.5 18 12 18 H15 Z" fill="#b8b8b8"/></svg>
<div style="left:1550px;top:86px;width:4px;height:4px;background:#b5ad9c;"></div>
<div style="left:1550px;top:94px;width:4px;height:4px;background:#b5ad9c;"></div>
<div style="left:1550px;top:102px;width:4px;height:4px;background:#b5ad9c;"></div>
<div style="left:1550px;top:110px;width:4px;height:4px;background:#b5ad9c;"></div>
<svg style="left:1562px;top:84px" width="32" height="32" viewBox="0 0 32 32"><defs><radialGradient id="gl2" cx=".4" cy=".3" r=".8"><stop offset="0" stop-color="#7fc8f8"/><stop offset=".6" stop-color="#2a7ad0"/><stop offset="1" stop-color="#1a3a8a"/></radialGradient></defs><circle cx="14" cy="15" r="13" fill="url(#gl2)" stroke="#c8c0a0" stroke-width="1"/><path d="M6 8 L12 4 L15 10 L21 5 L23 12 L16 20 L13 14 L8 14 Z" fill="#a8c86a" opacity=".85"/><path d="M8 6 L12 12 M18 6 L15 13" stroke="#f0f0e0" stroke-width="1.6"/><path d="M13 18 L16 18 L14.5 22 Z" fill="#c83a2a"/></svg>
<div style="left:1600px;top:86px;width:4px;height:4px;background:#b5ad9c;"></div>
<div style="left:1600px;top:94px;width:4px;height:4px;background:#b5ad9c;"></div>
<div style="left:1600px;top:102px;width:4px;height:4px;background:#b5ad9c;"></div>
<div style="left:1600px;top:110px;width:4px;height:4px;background:#b5ad9c;"></div>
<svg style="left:1611px;top:84px" width="32" height="32" viewBox="0 0 32 32"><defs><radialGradient id="gl" cx=".4" cy=".3" r=".8"><stop offset="0" stop-color="#8fd0f8"/><stop offset=".6" stop-color="#2f7fd0"/><stop offset="1" stop-color="#1f3f8a"/></radialGradient></defs><circle cx="20" cy="9" r="8" fill="url(#gl)"/><path d="M16.4 4.6 L20.8 3.8 L23.6 7.4 L20.8 12.6 L19.2 8.6 Z" fill="#9fc85a" opacity=".9"/><path d="M19.6 9.8 L21.6 10.2 L20.4 13.8 Z" fill="#c83a2a" opacity=".8"/><path d="M1 22 L8 10 L16 6 L13 14 L20 22 Z" fill="#c8d8f0" stroke="#7a98d0" stroke-width="1.2"/><path d="M0 24 Q10 20 20 24 Z" fill="#1f2f8a"/><path d="M17 17 L28 24 L17 31 Z" fill="#3fa04a" stroke="#2a8a3a" stroke-width="1"/><path d="M20 19 L30 24.5 L20 30" fill="#3fa04a"/></svg>
<div style="left:1650px;top:86px;width:4px;height:4px;background:#b5ad9c;"></div>
<div style="left:1650px;top:94px;width:4px;height:4px;background:#b5ad9c;"></div>
<div style="left:1650px;top:102px;width:4px;height:4px;background:#b5ad9c;"></div>
<div style="left:1650px;top:110px;width:4px;height:4px;background:#b5ad9c;"></div>
<svg style="left:1662px;top:84px" width="32" height="32" viewBox="0 0 32 32"><defs><linearGradient id="gg" x1="0" y1="0" x2="0" y2="1"><stop offset="0" stop-color="#f8f8f8"/><stop offset="1" stop-color="#d4d4d4"/></linearGradient></defs><path d="M6 1 H14 V12 H19 L10 22 L1 12 H6 Z" fill="url(#gg)" stroke="#b4b4b4" stroke-width="1.6" stroke-linejoin="round"/><path d="M17 5 H27 M21 10 H27 M21 15 H27 M15 20 H27 M15 25 H27" stroke="#d0d0d0" stroke-width="1.6"/><path d="M30 4 V30 M3 24 V30" stroke="#c0c0c0" stroke-width="1.6"/><rect x="7" y="24" width="6" height="4" fill="#b0b0b0"/></svg>
<svg style="left:1705px;top:95px" width="14" height="8" viewBox="0 0 14 8"><path d="M0 0 H14 L7 8 Z" fill="#6a6a72"/></svg>
<svg style="left:1731px;top:84px" width="32" height="32" viewBox="0 0 32 32"><defs><linearGradient id="gg" x1="0" y1="0" x2="0" y2="1"><stop offset="0" stop-color="#f8f8f8"/><stop offset="1" stop-color="#d4d4d4"/></linearGradient></defs><path d="M6 31 H14 V18 H19 L10 8 L1 18 H6 Z" fill="url(#gg)" stroke="#b4b4b4" stroke-width="1.6" stroke-linejoin="round"/><path d="M15 5 H27 M17 10 H27 M21 15 H27 M21 20 H27 M18 25 H27" stroke="#d0d0d0" stroke-width="1.6"/><path d="M30 1 V28 M3 1 V7" stroke="#c0c0c0" stroke-width="1.6"/><rect x="7" y="2" width="6" height="4" fill="#b0b0b0"/></svg>
<svg style="left:1775px;top:95px" width="14" height="8" viewBox="0 0 14 8"><path d="M0 0 H14 L7 8 Z" fill="#6a6a72"/></svg>
<svg style="left:1800px;top:84px" width="32" height="32" viewBox="0 0 32 32"><defs><linearGradient id="yg2" x1="0" y1="0" x2="0" y2="1"><stop offset="0" stop-color="#fffbe8"/><stop offset="1" stop-color="#fbdf90"/></linearGradient></defs><path d="M5 16 L17 4 V11 H30 Q32 11 32 13 V19 Q32 21 30 21 H17 V28 Z" fill="url(#yg2)" stroke="#c08414" stroke-width="2.2" stroke-linejoin="round"/><path d="M5 4 V14 M0.5 6.5 L9.5 11.5 M9.5 6.5 L0.5 11.5" stroke="#2f4f8a" stroke-width="2.2"/></svg>
<svg style="left:1840px;top:84px" width="32" height="32" viewBox="0 0 32 32"><defs><linearGradient id="yg2" x1="0" y1="0" x2="0" y2="1"><stop offset="0" stop-color="#fffbe8"/><stop offset="1" stop-color="#fbdf90"/></linearGradient></defs><path d="M27 16 L15 4 V11 H2 Q0 11 0 13 V19 Q0 21 2 21 H15 V28 Z" fill="url(#yg2)" stroke="#c08414" stroke-width="2.2" stroke-linejoin="round"/><path d="M27 4 V14 M22.5 6.5 L31.5 11.5 M31.5 6.5 L22.5 11.5" stroke="#2f4f8a" stroke-width="2.2"/></svg>
<svg style="left:1880px;top:84px" width="32" height="32" viewBox="0 0 32 32"><defs><linearGradient id="yg2" x1="0" y1="0" x2="0" y2="1"><stop offset="0" stop-color="#fffbe8"/><stop offset="1" stop-color="#fbdf90"/></linearGradient></defs><path d="M2 16 L14 4 V11 H27 Q29 11 29 13 V19 Q29 21 27 21 H14 V28 Z" fill="url(#yg2)" stroke="#c08414" stroke-width="2.2" stroke-linejoin="round"/></svg>
<svg style="left:1923px;top:95px" width="14" height="8" viewBox="0 0 14 8"><path d="M0 0 H14 L7 8 Z" fill="#222"/></svg>
<svg style="left:1951px;top:84px" width="32" height="32" viewBox="0 0 32 32"><path d="M30 16 L18 4 V11 H5 Q3 11 3 13 V19 Q3 21 5 21 H18 V28 Z" fill="#f4f4f4" stroke="#c0c0c0" stroke-width="2.2" stroke-linejoin="round"/></svg>
<svg style="left:1993px;top:95px" width="14" height="8" viewBox="0 0 14 8"><path d="M0 0 H14 L7 8 Z" fill="#6a6a72"/></svg>
<div style="left:2018px;top:83px;width:1px;height:33px;background:#9a9a9a;"></div>
<svg style="left:2028px;top:84px" width="32" height="32" viewBox="0 0 32 32"><rect x="2" y="8" width="28" height="23" fill="#eef7fd" stroke="#a89a6a" stroke-width="2"/><rect x="2" y="8" width="28" height="5" fill="#3a86d8"/><path d="M17 21 L23 13" stroke="#222" stroke-width="2"/><path d="M16 27 L19 20" stroke="#a8c8e0" stroke-width="3"/><path d="M20 6 Q24 -1 30 2 Q34 6 28 11 Q24 13 20 6 Z" fill="#3fa03f" stroke="#1f6f2a" stroke-width="1.4"/></svg>
<svg style="left:2712px;top:84px" width="32" height="32" viewBox="0 0 32 32"><circle cx="12" cy="12" r="9" fill="none" stroke="#4a4a4a" stroke-width="3.6"/><path d="M18.5 18.5 L29 29" stroke="#4a4a4a" stroke-width="4.4" stroke-linecap="round"/></svg>
<div style="left:2772px;top:87px;width:4px;height:4px;background:#b5ad9c;"></div>
<div style="left:2772px;top:95px;width:4px;height:4px;background:#b5ad9c;"></div>
<div style="left:2772px;top:103px;width:4px;height:4px;background:#b5ad9c;"></div>
<div style="left:2772px;top:111px;width:4px;height:4px;background:#b5ad9c;"></div>
<svg style="left:2783px;top:84px" width="32" height="32" viewBox="0 0 32 32"><rect x="2" y="7" width="23" height="22" rx="2" fill="#fdfdfd" stroke="#7a7a6a" stroke-width="2"/><rect x="2" y="7" width="23" height="5" fill="#3a7fd0"/><path d="M2 19 H25 M12 12 V29" stroke="#7a7a6a" stroke-width="2"/><path d="M14 27 L23 17" stroke="#f0c8a8" stroke-width="1.6" stroke-dasharray="2 2"/><path d="M25 0 L32 7 L25 14 L18 7 Z" fill="#fbe9a8" stroke="#c8a030" stroke-width="1.4"/><path d="M25 3 V11 M21 7 H29" stroke="#fff" stroke-width="2"/></svg>
<div style="left:2821px;top:83px;width:1px;height:33px;background:#9a9a9a;"></div>
<div style="left:2827px;top:80px;width:38px;height:37px;background:#d6e6f8;border:1px solid #9cc3ec;border-radius:3px;box-sizing:border-box"></div>
<svg style="left:2830px;top:84px" width="32" height="32" viewBox="0 0 32 32"><rect x="2" y="9" width="8" height="8" fill="#fbe9a0" stroke="#b8901a" stroke-width="1.6"/><rect x="14" y="22" width="8" height="8" fill="#fbe9a0" stroke="#b8901a" stroke-width="1.6"/><rect x="24" y="20" width="7" height="7" fill="#fbe9a0" stroke="#b8901a" stroke-width="1.6"/><path d="M6 17 V26 H14 M22 24 H24" stroke="#b8901a" stroke-width="1.8" fill="none"/><ellipse cx="21" cy="9" rx="8" ry="7" transform="rotate(35 21 9)" fill="#a85a2a"/><path d="M16 5 L26 12 M15 8 L24 15 M19 3 L28 9" stroke="#d8a070" stroke-width="1.2"/></svg>
</body></html>
